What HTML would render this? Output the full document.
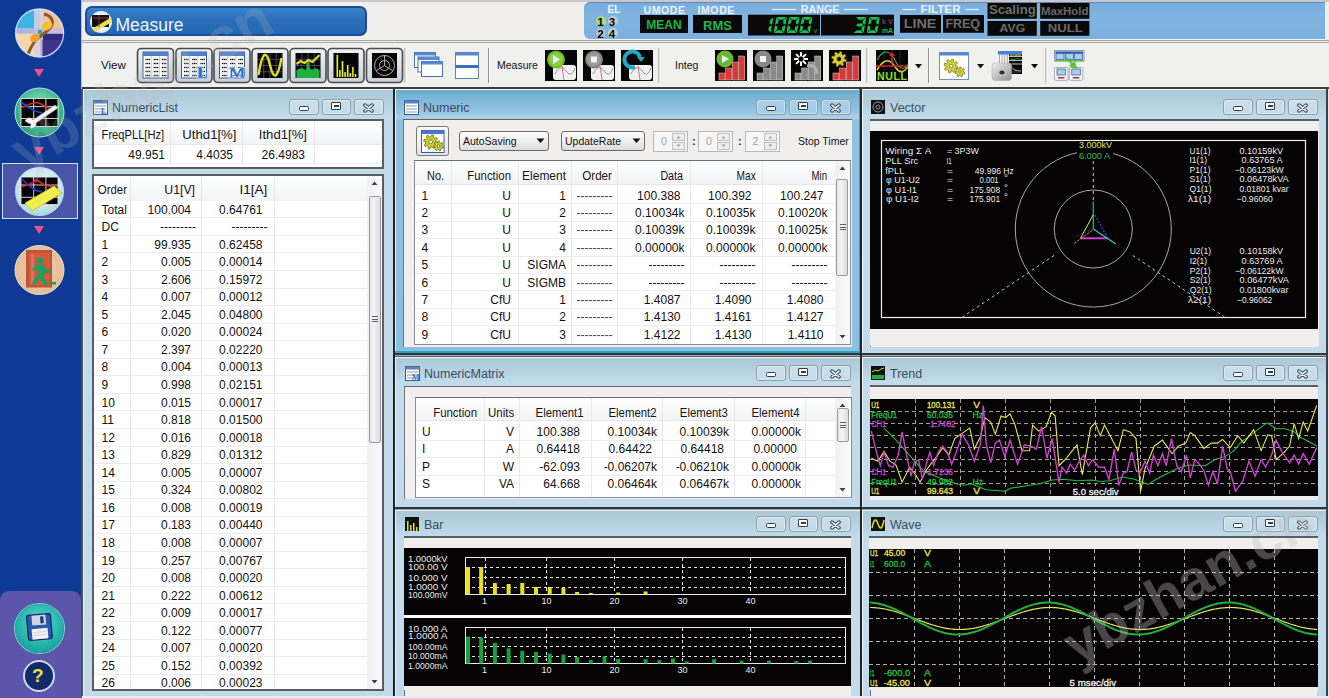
<!DOCTYPE html><html><head><meta charset="utf-8"><style>
html,body{margin:0;padding:0;}
body{width:1329px;height:698px;overflow:hidden;position:relative;background:#f0efee;font-family:"Liberation Sans", sans-serif;}
div{box-sizing:border-box;}
</style></head><body>
<div style="position:absolute;left:0px;top:0px;width:81px;height:698px;background:#0e3a95;"></div>
<div style="position:absolute;left:2px;top:163px;width:76px;height:56px;background:#4a55a8;border:1px solid #d8dcf0;"></div>
<div style="position:absolute;left:0px;top:591px;width:81px;height:107px;background:#5b56a9;border-radius:9px 9px 0 0;"></div>
<svg style="position:absolute;left:0;top:0" width="81" height="300"><defs><clipPath id="c1"><circle cx="39.6" cy="33" r="24"/></clipPath><radialGradient id="g2" cx="0.5" cy="0.4" r="0.6"><stop offset="0" stop-color="#a0e8c8"/><stop offset="0.7" stop-color="#40b890"/><stop offset="1" stop-color="#2a9a78"/></radialGradient><radialGradient id="g3" cx="0.5" cy="0.4" r="0.6"><stop offset="0" stop-color="#f0fbff"/><stop offset="0.7" stop-color="#c8e6f0"/><stop offset="1" stop-color="#a8d4e4"/></radialGradient><radialGradient id="g4" cx="0.5" cy="0.5" r="0.6"><stop offset="0" stop-color="#f0d0b0"/><stop offset="0.8" stop-color="#e8bc98"/><stop offset="1" stop-color="#d8c0a0"/></radialGradient></defs><g clip-path="url(#c1)"><rect x="14" y="8" width="26" height="25" fill="#3cb4e4"/><rect x="40" y="8" width="25" height="25" fill="#f0c498"/><rect x="14" y="33" width="26" height="25" fill="#f2d8a8"/><rect x="40" y="33" width="25" height="25" fill="#2c2c84"/><rect x="34" y="8" width="9" height="50" fill="#d8d0e8" opacity="0.85"/><rect x="14" y="28" width="50" height="6" fill="#c8b8e0" opacity="0.8"/><rect x="42" y="40" width="20" height="16" fill="#4a3a90" opacity="0.6"/><path d="M44,14 C52,16 55,22 50,28 C46,33 40,36 36,40 C32,44 30,50 28,54" fill="none" stroke="#8a5a20" stroke-width="3"/><ellipse cx="47" cy="26" rx="6" ry="4" fill="#f0c030" transform="rotate(-30 47 26)"/><ellipse cx="35" cy="38" rx="5" ry="4" fill="#f0a030" transform="rotate(-30 35 38)"/><rect x="38" y="30" width="4" height="4" fill="#30a0a0"/></g><circle cx="39.6" cy="33" r="24" fill="none" stroke="#d8e4f8" stroke-width="1.3" opacity="0.9"/><circle cx="39.5" cy="112.5" r="24.5" fill="url(#g2)"/><circle cx="39.5" cy="112.5" r="24.5" fill="none" stroke="#b8e8e0" stroke-width="1"/><rect x="21" y="98.5" width="37" height="28" fill="#050505"/><path d="M21,98.5 H58 V126.5 H21 Z M33.7,98.5 V126.5 M45.9,98.5 V126.5 M21,106.6 H58 M21,118.5 H58" fill="none" stroke="#e8e8e8" stroke-width="0.9"/><polyline points="21,108 27,105 33,103 38,102.5 45,106 50,109 58,108" fill="none" stroke="#e02020" stroke-width="1.6"/><polyline points="21,102 28,107 35,111 42,113" fill="none" stroke="#2040e0" stroke-width="1.6"/><path d="M25,121 C27,117 31,117 33,120 L55,105 L58,108 L36,123 C37,126 34,129 30,128 L31,124 L28,123 Z" fill="#f4f4f4" stroke="#a0a0a0" stroke-width="0.6"/><circle cx="39.5" cy="191.5" r="24.5" fill="url(#g3)"/><rect x="21" y="177" width="37" height="27.6" fill="#050505"/><path d="M21,177 H58 V204.6 H21 Z M33.7,177 V204.6 M45.9,177 V204.6 M21,185 H58 M21,197.3 H58" fill="none" stroke="#e8e8e8" stroke-width="0.9"/><polyline points="21,187 30,184 37,180 43,184 46,186 58,187" fill="none" stroke="#e02020" stroke-width="1.6"/><polyline points="22,179 28,185 35,190 42,192" fill="none" stroke="#2040e0" stroke-width="1.6"/><path d="M25,203 L54,186 L62,193 L32,211 Z" fill="#f0f050" stroke="#c0b830" stroke-width="0.8"/><path d="M30,205 L56,190" stroke="#c8c030" stroke-width="0.8" stroke-dasharray="1 2"/><circle cx="39.5" cy="270" r="24.5" fill="url(#g4)"/><circle cx="39.5" cy="270" r="24.5" fill="none" stroke="#d8e8d0" stroke-width="1"/><rect x="26" y="250" width="26" height="37.5" fill="#b85838"/><rect x="29" y="252.5" width="21" height="33" fill="#d85838"/><rect x="31" y="254" width="3" height="30" fill="#c09090" opacity="0.6"/><circle cx="39.8" cy="260.4" r="3.3" fill="#20a060"/><path d="M36,264 L43,264.5 L47,270 L52,271 L51.5,273.5 L45.5,272.5 L43,276 L48,284 L45,286 L40,279 L35,285 L32,283 L37.5,275 L37,268 L34,271 L32,269.5 Z" fill="#20a060"/><path d="M49,282 L56,282 L56,284.5 L49,284.5 Z" fill="#20a060"/></svg>
<div style="position:absolute;left:34px;top:69px;width:0;height:0;border-left:5px solid transparent;border-right:5px solid transparent;border-top:8px solid #f0508a;"></div>
<div style="position:absolute;left:34px;top:147px;width:0;height:0;border-left:5px solid transparent;border-right:5px solid transparent;border-top:8px solid #f0508a;"></div>
<div style="position:absolute;left:34px;top:226px;width:0;height:0;border-left:5px solid transparent;border-right:5px solid transparent;border-top:8px solid #f0508a;"></div>
<div style="position:absolute;left:15.0px;top:603.5px;width:49.0px;height:49.0px;border-radius:50%;background:radial-gradient(circle at 50% 40%,#60e0d0 0%,#20b0a8 60%,#188c90 100%);box-shadow:0 0 0 1px #80d8d0;"></div>
<svg style="position:absolute;left:0;top:590px" width="81" height="60"><g transform="rotate(-5 39.5 38)"><rect x="27.5" y="24.5" width="24" height="25" rx="2" fill="#2858b0" stroke="#0c2458" stroke-width="1.2"/><rect x="32.5" y="25" width="14" height="10" fill="#d0d4dc"/><rect x="41" y="26.5" width="3.2" height="7" fill="#203878"/><rect x="31.5" y="38.5" width="16" height="10.5" fill="#f2f2f2"/><line x1="33" y1="42" x2="46" y2="42" stroke="#c0c0c8" stroke-width="0.6"/><line x1="33" y1="45" x2="46" y2="45" stroke="#c0c0c8" stroke-width="0.6"/></g></svg>
<div style="position:absolute;left:24.5px;top:662px;width:28px;height:28px;border-radius:50%;background:#122a6a;box-shadow:0 0 0 2px #d0d8e8;"></div>
<div style="position:absolute;left:32px;top:666px;font-size:19px;line-height:1;color:#e8e040;white-space:pre;font-weight:bold;">?</div>
<div style="position:absolute;left:81px;top:0px;width:1px;height:698px;background:#b8c0d0;"></div>
<div style="position:absolute;left:82px;top:0px;width:1247px;height:2px;background:#c9c7c8;"></div>
<div style="position:absolute;left:82px;top:40px;width:1247px;height:1px;background:#a8a8a8;"></div>
<div style="position:absolute;left:82px;top:42px;width:1247px;height:1px;background:#a8a8a8;"></div>
<div style="position:absolute;left:82px;top:43px;width:1247px;height:45px;background:#f0f0ee;"></div>
<div style="position:absolute;left:85px;top:6px;width:282px;height:30px;background:linear-gradient(#3a82c8,#2a6cb8 50%,#2468b4);border:2px solid #1c4c98;border-radius:7px;"></div>
<div style="position:absolute;left:89.5px;top:10.5px;width:22px;height:22px;border-radius:50%;background:radial-gradient(circle,#f8fcff 40%,#b8d8e8 100%);"></div>
<div style="position:absolute;left:92px;top:15px;width:17px;height:12px;background:#101010;"></div>
<svg style="position:absolute;left:88px;top:9px" width="26" height="26"><path d="M4,20 L22,9 L24,13 L7,23 Z" fill="#e8e050"/><line x1="5" y1="9" x2="21" y2="9" stroke="#a03030" stroke-width="1"/><line x1="11" y1="6" x2="11" y2="18" stroke="#803060" stroke-width="1"/></svg>
<div style="position:absolute;left:115.5px;top:16.5px;font-size:17.5px;line-height:1;color:#eef4fc;white-space:pre;">Measure</div>
<div style="position:absolute;left:584px;top:2px;width:741px;height:37px;background:linear-gradient(#78aede,#80b4e0 40%,#7cb0de);border-top:1px solid #5a8ac0;border-radius:6px 0 0 6px;"></div>
<div style="position:absolute;left:607.5px;top:5px;font-size:10px;line-height:1;color:#eef4fc;white-space:pre;font-weight:bold;">EL</div>
<div style="position:absolute;left:596px;top:16px;width:10px;height:10px;border-radius:50%;background:#a8d880;"></div>
<div style="position:absolute;left:607.5px;top:16px;width:10px;height:10px;border-radius:50%;background:#c4ccd4;"></div>
<div style="position:absolute;left:596px;top:28px;width:10px;height:10px;border-radius:50%;background:#b8c4cc;"></div>
<div style="position:absolute;left:607.5px;top:28px;width:10px;height:10px;border-radius:50%;background:#c4ccd4;"></div>
<div style="position:absolute;left:597.5px;top:17.0px;font-size:11px;line-height:1;color:#000;white-space:pre;font-weight:bold;">1</div>
<div style="position:absolute;left:609px;top:17.0px;font-size:11px;line-height:1;color:#000;white-space:pre;font-weight:bold;">3</div>
<div style="position:absolute;left:597.5px;top:29.0px;font-size:11px;line-height:1;color:#000;white-space:pre;font-weight:bold;">2</div>
<div style="position:absolute;left:609px;top:29.0px;font-size:11px;line-height:1;color:#000;white-space:pre;font-weight:bold;">4</div>
<div style="position:absolute;left:643.5px;top:5px;font-size:10.5px;line-height:1;color:#eef4fc;white-space:pre;font-weight:bold;letter-spacing:0.6px;">UMODE</div>
<div style="position:absolute;left:697.5px;top:5px;font-size:10.5px;line-height:1;color:#eef4fc;white-space:pre;font-weight:bold;letter-spacing:0.6px;">IMODE</div>
<div style="position:absolute;left:640px;top:15px;width:48px;height:17.5px;background:#0a0808;"></div>
<div style="position:absolute;left:564px;width:200px;top:19px;font-size:12px;line-height:1;color:#18b848;white-space:pre;text-align:center;font-weight:bold;">MEAN</div>
<div style="position:absolute;left:693px;top:15px;width:49px;height:17.5px;background:#0a0808;"></div>
<div style="position:absolute;left:617.5px;width:200px;top:19px;font-size:13px;line-height:1;color:#18b848;white-space:pre;text-align:center;font-weight:bold;">RMS</div>
<svg style="position:absolute;left:0;top:0" width="1329" height="40"><line x1="772" y1="9.5" x2="796" y2="9.5" stroke="#eef4fc" stroke-width="1.2"/><line x1="844" y1="9.5" x2="868" y2="9.5" stroke="#eef4fc" stroke-width="1.2"/><text x="800.8" y="12.8" font-family="Liberation Sans" font-size="10.5" fill="#eef4fc" font-weight="bold" textLength="38.5" lengthAdjust="spacingAndGlyphs">RANGE</text><rect x="748" y="14.7" width="72" height="20.8" fill="#0a0808"/><rect x="821" y="14.7" width="73" height="20.8" fill="#0a0808"/><g transform="translate(4.4,0) skewX(-10)"><polygon points="769.20,20.15 772.00,17.35 772.00,24.65 769.20,23.25" fill="#18c050"/><polygon points="769.20,26.75 772.00,25.35 772.00,32.65 769.20,29.85" fill="#18c050"/></g><g transform="translate(4.4,0) skewX(-10)"><polygon points="775.35,17.00 785.15,17.00 782.35,19.80 778.15,19.80" fill="#18c050"/><polygon points="778.15,30.20 782.35,30.20 785.15,33.00 775.35,33.00" fill="#18c050"/><polygon points="775.00,17.35 777.80,20.15 777.80,23.25 775.00,24.65" fill="#18c050"/><polygon points="775.00,25.35 777.80,26.75 777.80,29.85 775.00,32.65" fill="#18c050"/><polygon points="782.70,20.15 785.50,17.35 785.50,24.65 782.70,23.25" fill="#18c050"/><polygon points="782.70,26.75 785.50,25.35 785.50,32.65 782.70,29.85" fill="#18c050"/></g><g transform="translate(4.4,0) skewX(-10)"><polygon points="788.15,17.00 797.95,17.00 795.15,19.80 790.95,19.80" fill="#18c050"/><polygon points="790.95,30.20 795.15,30.20 797.95,33.00 788.15,33.00" fill="#18c050"/><polygon points="787.80,17.35 790.60,20.15 790.60,23.25 787.80,24.65" fill="#18c050"/><polygon points="787.80,25.35 790.60,26.75 790.60,29.85 787.80,32.65" fill="#18c050"/><polygon points="795.50,20.15 798.30,17.35 798.30,24.65 795.50,23.25" fill="#18c050"/><polygon points="795.50,26.75 798.30,25.35 798.30,32.65 795.50,29.85" fill="#18c050"/></g><g transform="translate(4.4,0) skewX(-10)"><polygon points="800.95,17.00 810.75,17.00 807.95,19.80 803.75,19.80" fill="#18c050"/><polygon points="803.75,30.20 807.95,30.20 810.75,33.00 800.95,33.00" fill="#18c050"/><polygon points="800.60,17.35 803.40,20.15 803.40,23.25 800.60,24.65" fill="#18c050"/><polygon points="800.60,25.35 803.40,26.75 803.40,29.85 800.60,32.65" fill="#18c050"/><polygon points="808.30,20.15 811.10,17.35 811.10,24.65 808.30,23.25" fill="#18c050"/><polygon points="808.30,26.75 811.10,25.35 811.10,32.65 808.30,29.85" fill="#18c050"/></g><text x="813.5" y="32.5" font-family="Liberation Sans" font-size="6" fill="#18c050" font-weight="normal" textLength="4" lengthAdjust="spacingAndGlyphs">V</text><g transform="translate(4.4,0) skewX(-10)"><polygon points="854.85,17.00 864.65,17.00 861.85,19.80 857.65,19.80" fill="#18c050"/><polygon points="857.65,30.20 861.85,30.20 864.65,33.00 854.85,33.00" fill="#18c050"/><polygon points="856.25,25.00 857.65,23.60 861.85,23.60 863.25,25.00 861.85,26.40 857.65,26.40" fill="#18c050"/><polygon points="862.20,20.15 865.00,17.35 865.00,24.65 862.20,23.25" fill="#18c050"/><polygon points="862.20,26.75 865.00,25.35 865.00,32.65 862.20,29.85" fill="#18c050"/></g><g transform="translate(4.4,0) skewX(-10)"><polygon points="868.35,17.00 878.15,17.00 875.35,19.80 871.15,19.80" fill="#18c050"/><polygon points="871.15,30.20 875.35,30.20 878.15,33.00 868.35,33.00" fill="#18c050"/><polygon points="868.00,17.35 870.80,20.15 870.80,23.25 868.00,24.65" fill="#18c050"/><polygon points="868.00,25.35 870.80,26.75 870.80,29.85 868.00,32.65" fill="#18c050"/><polygon points="875.70,20.15 878.50,17.35 878.50,24.65 875.70,23.25" fill="#18c050"/><polygon points="875.70,26.75 878.50,25.35 878.50,32.65 875.70,29.85" fill="#18c050"/></g><text x="882" y="24" font-family="Liberation Sans" font-size="6.5" fill="#a04878" font-weight="normal" textLength="11" lengthAdjust="spacingAndGlyphs">k V</text><text x="882" y="32.5" font-family="Liberation Sans" font-size="7" fill="#18c050" font-weight="bold" textLength="11" lengthAdjust="spacingAndGlyphs">mA</text><line x1="902.5" y1="9.5" x2="916" y2="9.5" stroke="#eef4fc" stroke-width="1.2"/><line x1="965.7" y1="9.5" x2="978.5" y2="9.5" stroke="#eef4fc" stroke-width="1.2"/><text x="920.6" y="13.2" font-family="Liberation Sans" font-size="10.5" fill="#eef4fc" font-weight="bold" textLength="40" lengthAdjust="spacingAndGlyphs">FILTER</text><rect x="900" y="15" width="41" height="17.8" fill="#0a0808"/><rect x="943" y="15" width="41" height="17.8" fill="#0a0808"/><text x="903.7" y="28.3" font-family="Liberation Sans" font-size="13" fill="#6e6e6e" font-weight="bold" textLength="32.7" lengthAdjust="spacingAndGlyphs">LINE</text><text x="945.4" y="28.3" font-family="Liberation Sans" font-size="13" fill="#6e6e6e" font-weight="bold" textLength="34.6" lengthAdjust="spacingAndGlyphs">FREQ</text><rect x="987.5" y="3" width="49.3" height="15.8" fill="#0a0808"/><rect x="1040.2" y="3" width="49.2" height="15.8" fill="#0a0808"/><rect x="987.5" y="21" width="49.3" height="14.8" fill="#0a0808"/><rect x="1040.2" y="21" width="49.2" height="14.8" fill="#0a0808"/><text x="989" y="14.3" font-family="Liberation Sans" font-size="12.5" fill="#6a7068" font-weight="bold" textLength="46.7" lengthAdjust="spacingAndGlyphs">Scaling</text><text x="1041" y="15" font-family="Liberation Sans" font-size="10.5" fill="#686868" font-weight="bold" textLength="47.4" lengthAdjust="spacingAndGlyphs">MaxHold</text><text x="999.6" y="32.4" font-family="Liberation Sans" font-size="11.5" fill="#6a6a6a" font-weight="bold" textLength="25.6" lengthAdjust="spacingAndGlyphs">AVG</text><text x="1047.7" y="32.4" font-family="Liberation Sans" font-size="11.5" fill="#6a6a6a" font-weight="bold" textLength="35" lengthAdjust="spacingAndGlyphs">NULL</text></svg>
<div style="position:absolute;left:101px;top:60px;font-size:11.5px;line-height:1;color:#111;white-space:pre;">View</div>
<svg style="position:absolute;left:0;top:0" width="1329" height="90"><defs><linearGradient id="btng" x1="0" y1="0" x2="0" y2="1"><stop offset="0" stop-color="#f0f4f8"/><stop offset="1" stop-color="#c8d0d8"/></linearGradient><linearGradient id="camg" x1="0" y1="0" x2="1" y2="1"><stop offset="0" stop-color="#f0f0f0"/><stop offset="1" stop-color="#909090"/></linearGradient></defs><rect x="137.5" y="48.5" width="36" height="34" rx="4" fill="url(#btng)" stroke="#4a4a4a" stroke-width="1.6"/><rect x="176.0" y="48.5" width="36" height="34" rx="4" fill="url(#btng)" stroke="#4a4a4a" stroke-width="1.6"/><rect x="214.0" y="48.5" width="36" height="34" rx="4" fill="url(#btng)" stroke="#4a4a4a" stroke-width="1.6"/><rect x="252.0" y="48.5" width="36" height="34" rx="4" fill="url(#btng)" stroke="#4a4a4a" stroke-width="1.6"/><rect x="290.0" y="48.5" width="36" height="34" rx="4" fill="url(#btng)" stroke="#4a4a4a" stroke-width="1.6"/><rect x="328.0" y="48.5" width="36" height="34" rx="4" fill="url(#btng)" stroke="#4a4a4a" stroke-width="1.6"/><rect x="366.5" y="48.5" width="36" height="34" rx="4" fill="url(#btng)" stroke="#4a4a4a" stroke-width="1.6"/><rect x="143" y="52" width="25" height="26" fill="#fff" stroke="#3a5a90" stroke-width="1"/><rect x="143" y="52" width="25" height="4" fill="#5080c8"/><rect x="145.4" y="58.8" width="1.3" height="1.4" fill="#111"/><rect x="147.1" y="58.8" width="1.3" height="1.4" fill="#111"/><rect x="148.8" y="58.8" width="1.3" height="1.4" fill="#111"/><rect x="153.6" y="58.8" width="1.3" height="1.4" fill="#111"/><rect x="155.3" y="58.8" width="1.3" height="1.4" fill="#111"/><rect x="157.0" y="58.8" width="1.3" height="1.4" fill="#111"/><rect x="161.8" y="58.8" width="1.3" height="1.4" fill="#111"/><rect x="163.5" y="58.8" width="1.3" height="1.4" fill="#111"/><rect x="165.2" y="58.8" width="1.3" height="1.4" fill="#111"/><rect x="145.4" y="62.8" width="1.3" height="1.4" fill="#111"/><rect x="147.1" y="62.8" width="1.3" height="1.4" fill="#111"/><rect x="148.8" y="62.8" width="1.3" height="1.4" fill="#111"/><rect x="153.6" y="62.8" width="1.3" height="1.4" fill="#111"/><rect x="155.3" y="62.8" width="1.3" height="1.4" fill="#111"/><rect x="157.0" y="62.8" width="1.3" height="1.4" fill="#111"/><rect x="161.8" y="62.8" width="1.3" height="1.4" fill="#111"/><rect x="163.5" y="62.8" width="1.3" height="1.4" fill="#111"/><rect x="165.2" y="62.8" width="1.3" height="1.4" fill="#111"/><rect x="145.4" y="66.8" width="1.3" height="1.4" fill="#111"/><rect x="147.1" y="66.8" width="1.3" height="1.4" fill="#111"/><rect x="148.8" y="66.8" width="1.3" height="1.4" fill="#111"/><rect x="153.6" y="66.8" width="1.3" height="1.4" fill="#111"/><rect x="155.3" y="66.8" width="1.3" height="1.4" fill="#111"/><rect x="157.0" y="66.8" width="1.3" height="1.4" fill="#111"/><rect x="161.8" y="66.8" width="1.3" height="1.4" fill="#111"/><rect x="163.5" y="66.8" width="1.3" height="1.4" fill="#111"/><rect x="165.2" y="66.8" width="1.3" height="1.4" fill="#111"/><rect x="145.4" y="70.8" width="1.3" height="1.4" fill="#111"/><rect x="147.1" y="70.8" width="1.3" height="1.4" fill="#111"/><rect x="148.8" y="70.8" width="1.3" height="1.4" fill="#111"/><rect x="153.6" y="70.8" width="1.3" height="1.4" fill="#111"/><rect x="155.3" y="70.8" width="1.3" height="1.4" fill="#111"/><rect x="157.0" y="70.8" width="1.3" height="1.4" fill="#111"/><rect x="161.8" y="70.8" width="1.3" height="1.4" fill="#111"/><rect x="163.5" y="70.8" width="1.3" height="1.4" fill="#111"/><rect x="165.2" y="70.8" width="1.3" height="1.4" fill="#111"/><rect x="145.4" y="74.8" width="1.3" height="1.4" fill="#111"/><rect x="147.1" y="74.8" width="1.3" height="1.4" fill="#111"/><rect x="148.8" y="74.8" width="1.3" height="1.4" fill="#111"/><rect x="153.6" y="74.8" width="1.3" height="1.4" fill="#111"/><rect x="155.3" y="74.8" width="1.3" height="1.4" fill="#111"/><rect x="157.0" y="74.8" width="1.3" height="1.4" fill="#111"/><rect x="161.8" y="74.8" width="1.3" height="1.4" fill="#111"/><rect x="163.5" y="74.8" width="1.3" height="1.4" fill="#111"/><rect x="165.2" y="74.8" width="1.3" height="1.4" fill="#111"/><line x1="151.2" y1="56" x2="151.2" y2="78" stroke="#aab" stroke-width="0.6"/><line x1="159.4" y1="56" x2="159.4" y2="78" stroke="#aab" stroke-width="0.6"/><rect x="181.5" y="52" width="25" height="26" fill="#fff" stroke="#3a5a90" stroke-width="1"/><rect x="181.5" y="52" width="25" height="4" fill="#5080c8"/><rect x="183.9" y="58.8" width="1.3" height="1.4" fill="#111"/><rect x="185.6" y="58.8" width="1.3" height="1.4" fill="#111"/><rect x="187.3" y="58.8" width="1.3" height="1.4" fill="#111"/><rect x="192.1" y="58.8" width="1.3" height="1.4" fill="#111"/><rect x="193.8" y="58.8" width="1.3" height="1.4" fill="#111"/><rect x="195.5" y="58.8" width="1.3" height="1.4" fill="#111"/><rect x="200.3" y="58.8" width="1.3" height="1.4" fill="#111"/><rect x="202.0" y="58.8" width="1.3" height="1.4" fill="#111"/><rect x="203.7" y="58.8" width="1.3" height="1.4" fill="#111"/><rect x="183.9" y="62.8" width="1.3" height="1.4" fill="#111"/><rect x="185.6" y="62.8" width="1.3" height="1.4" fill="#111"/><rect x="187.3" y="62.8" width="1.3" height="1.4" fill="#111"/><rect x="192.1" y="62.8" width="1.3" height="1.4" fill="#111"/><rect x="193.8" y="62.8" width="1.3" height="1.4" fill="#111"/><rect x="195.5" y="62.8" width="1.3" height="1.4" fill="#111"/><rect x="200.3" y="62.8" width="1.3" height="1.4" fill="#111"/><rect x="202.0" y="62.8" width="1.3" height="1.4" fill="#111"/><rect x="203.7" y="62.8" width="1.3" height="1.4" fill="#111"/><rect x="183.9" y="66.8" width="1.3" height="1.4" fill="#111"/><rect x="185.6" y="66.8" width="1.3" height="1.4" fill="#111"/><rect x="187.3" y="66.8" width="1.3" height="1.4" fill="#111"/><rect x="192.1" y="66.8" width="1.3" height="1.4" fill="#111"/><rect x="193.8" y="66.8" width="1.3" height="1.4" fill="#111"/><rect x="195.5" y="66.8" width="1.3" height="1.4" fill="#111"/><rect x="200.3" y="66.8" width="1.3" height="1.4" fill="#111"/><rect x="202.0" y="66.8" width="1.3" height="1.4" fill="#111"/><rect x="203.7" y="66.8" width="1.3" height="1.4" fill="#111"/><rect x="183.9" y="70.8" width="1.3" height="1.4" fill="#111"/><rect x="185.6" y="70.8" width="1.3" height="1.4" fill="#111"/><rect x="187.3" y="70.8" width="1.3" height="1.4" fill="#111"/><rect x="192.1" y="70.8" width="1.3" height="1.4" fill="#111"/><rect x="193.8" y="70.8" width="1.3" height="1.4" fill="#111"/><rect x="195.5" y="70.8" width="1.3" height="1.4" fill="#111"/><rect x="200.3" y="70.8" width="1.3" height="1.4" fill="#111"/><rect x="202.0" y="70.8" width="1.3" height="1.4" fill="#111"/><rect x="203.7" y="70.8" width="1.3" height="1.4" fill="#111"/><rect x="183.9" y="74.8" width="1.3" height="1.4" fill="#111"/><rect x="185.6" y="74.8" width="1.3" height="1.4" fill="#111"/><rect x="187.3" y="74.8" width="1.3" height="1.4" fill="#111"/><rect x="192.1" y="74.8" width="1.3" height="1.4" fill="#111"/><rect x="193.8" y="74.8" width="1.3" height="1.4" fill="#111"/><rect x="195.5" y="74.8" width="1.3" height="1.4" fill="#111"/><rect x="200.3" y="74.8" width="1.3" height="1.4" fill="#111"/><rect x="202.0" y="74.8" width="1.3" height="1.4" fill="#111"/><rect x="203.7" y="74.8" width="1.3" height="1.4" fill="#111"/><line x1="189.7" y1="56" x2="189.7" y2="78" stroke="#aab" stroke-width="0.6"/><line x1="197.9" y1="56" x2="197.9" y2="78" stroke="#aab" stroke-width="0.6"/><rect x="219.5" y="52" width="25" height="26" fill="#fff" stroke="#3a5a90" stroke-width="1"/><rect x="219.5" y="52" width="25" height="4" fill="#5080c8"/><rect x="221.9" y="58.8" width="1.3" height="1.4" fill="#111"/><rect x="223.6" y="58.8" width="1.3" height="1.4" fill="#111"/><rect x="225.3" y="58.8" width="1.3" height="1.4" fill="#111"/><rect x="230.1" y="58.8" width="1.3" height="1.4" fill="#111"/><rect x="231.8" y="58.8" width="1.3" height="1.4" fill="#111"/><rect x="233.5" y="58.8" width="1.3" height="1.4" fill="#111"/><rect x="238.3" y="58.8" width="1.3" height="1.4" fill="#111"/><rect x="240.0" y="58.8" width="1.3" height="1.4" fill="#111"/><rect x="241.7" y="58.8" width="1.3" height="1.4" fill="#111"/><rect x="221.9" y="62.8" width="1.3" height="1.4" fill="#111"/><rect x="223.6" y="62.8" width="1.3" height="1.4" fill="#111"/><rect x="225.3" y="62.8" width="1.3" height="1.4" fill="#111"/><rect x="230.1" y="62.8" width="1.3" height="1.4" fill="#111"/><rect x="231.8" y="62.8" width="1.3" height="1.4" fill="#111"/><rect x="233.5" y="62.8" width="1.3" height="1.4" fill="#111"/><rect x="238.3" y="62.8" width="1.3" height="1.4" fill="#111"/><rect x="240.0" y="62.8" width="1.3" height="1.4" fill="#111"/><rect x="241.7" y="62.8" width="1.3" height="1.4" fill="#111"/><rect x="221.9" y="66.8" width="1.3" height="1.4" fill="#111"/><rect x="223.6" y="66.8" width="1.3" height="1.4" fill="#111"/><rect x="225.3" y="66.8" width="1.3" height="1.4" fill="#111"/><rect x="230.1" y="66.8" width="1.3" height="1.4" fill="#111"/><rect x="231.8" y="66.8" width="1.3" height="1.4" fill="#111"/><rect x="233.5" y="66.8" width="1.3" height="1.4" fill="#111"/><rect x="238.3" y="66.8" width="1.3" height="1.4" fill="#111"/><rect x="240.0" y="66.8" width="1.3" height="1.4" fill="#111"/><rect x="241.7" y="66.8" width="1.3" height="1.4" fill="#111"/><rect x="221.9" y="70.8" width="1.3" height="1.4" fill="#111"/><rect x="223.6" y="70.8" width="1.3" height="1.4" fill="#111"/><rect x="225.3" y="70.8" width="1.3" height="1.4" fill="#111"/><rect x="230.1" y="70.8" width="1.3" height="1.4" fill="#111"/><rect x="231.8" y="70.8" width="1.3" height="1.4" fill="#111"/><rect x="233.5" y="70.8" width="1.3" height="1.4" fill="#111"/><rect x="238.3" y="70.8" width="1.3" height="1.4" fill="#111"/><rect x="240.0" y="70.8" width="1.3" height="1.4" fill="#111"/><rect x="241.7" y="70.8" width="1.3" height="1.4" fill="#111"/><rect x="221.9" y="74.8" width="1.3" height="1.4" fill="#111"/><rect x="223.6" y="74.8" width="1.3" height="1.4" fill="#111"/><rect x="225.3" y="74.8" width="1.3" height="1.4" fill="#111"/><rect x="230.1" y="74.8" width="1.3" height="1.4" fill="#111"/><rect x="231.8" y="74.8" width="1.3" height="1.4" fill="#111"/><rect x="233.5" y="74.8" width="1.3" height="1.4" fill="#111"/><rect x="238.3" y="74.8" width="1.3" height="1.4" fill="#111"/><rect x="240.0" y="74.8" width="1.3" height="1.4" fill="#111"/><rect x="241.7" y="74.8" width="1.3" height="1.4" fill="#111"/><line x1="227.7" y1="56" x2="227.7" y2="78" stroke="#aab" stroke-width="0.6"/><line x1="235.9" y1="56" x2="235.9" y2="78" stroke="#aab" stroke-width="0.6"/><path d="M196.5,66.8 H203.5 V68.2 H202.3 V76.4 H205.6 V73.2 H207.4 V78.2 H196.5 V76.8 H198.2 V68.2 H196.5 Z" fill="#2a70d0" stroke="#fff" stroke-width="0.6"/><path d="M229,67.6 H234.2 L237.2,73.6 L240.2,67.6 H245.2 V69 H243.9 V76.8 H245.2 V78.2 H239.6 V76.8 H240.8 V71.2 L237.6,78.2 H236.6 L232.6,71.2 V76.8 H233.8 V78.2 H229 V76.8 H230.3 V69 H229 Z" fill="#2a70d0" stroke="#fff" stroke-width="0.6"/><rect x="257.5" y="53" width="25" height="25" fill="#050505"/><rect x="295.5" y="53" width="25" height="25" fill="#050505"/><rect x="333.5" y="53" width="25" height="25" fill="#050505"/><rect x="372" y="53" width="25" height="25" fill="#050505"/><line x1="263.75" y1="53" x2="263.75" y2="78" stroke="#6a5a80" stroke-width="0.7"/><line x1="257.5" y1="59.25" x2="282.5" y2="59.25" stroke="#6a5a80" stroke-width="0.7"/><line x1="270.0" y1="53" x2="270.0" y2="78" stroke="#6a5a80" stroke-width="0.7"/><line x1="257.5" y1="65.5" x2="282.5" y2="65.5" stroke="#6a5a80" stroke-width="0.7"/><line x1="276.25" y1="53" x2="276.25" y2="78" stroke="#6a5a80" stroke-width="0.7"/><line x1="257.5" y1="71.75" x2="282.5" y2="71.75" stroke="#6a5a80" stroke-width="0.7"/><line x1="301.75" y1="53" x2="301.75" y2="78" stroke="#6a5a80" stroke-width="0.7"/><line x1="295.5" y1="59.25" x2="320.5" y2="59.25" stroke="#6a5a80" stroke-width="0.7"/><line x1="308.0" y1="53" x2="308.0" y2="78" stroke="#6a5a80" stroke-width="0.7"/><line x1="295.5" y1="65.5" x2="320.5" y2="65.5" stroke="#6a5a80" stroke-width="0.7"/><line x1="314.25" y1="53" x2="314.25" y2="78" stroke="#6a5a80" stroke-width="0.7"/><line x1="295.5" y1="71.75" x2="320.5" y2="71.75" stroke="#6a5a80" stroke-width="0.7"/><path d="M258.5,75 C262.5,50 266.5,50 270.0,65 C273.5,80 277.5,80 281.5,58" fill="none" stroke="#e0e020" stroke-width="2.4"/><polyline points="296.5,64 300.5,61 304.5,63 308.5,60 312.5,62 316.5,58 319.5,55" fill="none" stroke="#d8e020" stroke-width="2.2"/><path d="M296.5,78 L296.5,70 L301.5,68 L305.5,70 L308.5,66 L311.5,70 L315.5,68 L319.5,70 L319.5,78 Z" fill="#20b040"/><rect x="306.5" y="62" width="3" height="10" fill="#20b040"/><rect x="336.5" y="55" width="1.6" height="22" fill="#f0f010"/><rect x="339.1" y="70" width="1.6" height="7" fill="#f0f010"/><rect x="341.7" y="61" width="1.6" height="16" fill="#f0f010"/><rect x="344.3" y="72" width="1.6" height="5" fill="#f0f010"/><rect x="346.9" y="65" width="1.6" height="12" fill="#f0f010"/><rect x="349.5" y="73" width="1.6" height="4" fill="#f0f010"/><rect x="352.1" y="67" width="1.6" height="10" fill="#f0f010"/><rect x="354.7" y="74" width="1.6" height="3" fill="#f0f010"/><circle cx="384.5" cy="65.5" r="10" fill="none" stroke="#b0b0b0" stroke-width="1"/><circle cx="384.5" cy="65.5" r="5" fill="none" stroke="#b0b0b0" stroke-width="1"/><path d="M384.5,55 L384.5,65.5 L376,71 M384.5,65.5 L393,71" fill="none" stroke="#b0b0b0" stroke-width="1"/><line x1="405" y1="48" x2="405" y2="83" stroke="#909090" stroke-width="1"/><line x1="406" y1="48" x2="406" y2="83" stroke="#fff" stroke-width="1"/><line x1="488.5" y1="48" x2="488.5" y2="83" stroke="#909090" stroke-width="1"/><line x1="489.5" y1="48" x2="489.5" y2="83" stroke="#fff" stroke-width="1"/><line x1="659" y1="48" x2="659" y2="83" stroke="#909090" stroke-width="1"/><line x1="660" y1="48" x2="660" y2="83" stroke="#fff" stroke-width="1"/><line x1="867" y1="48" x2="867" y2="83" stroke="#909090" stroke-width="1"/><line x1="868" y1="48" x2="868" y2="83" stroke="#fff" stroke-width="1"/><line x1="928.5" y1="48" x2="928.5" y2="83" stroke="#909090" stroke-width="1"/><line x1="929.5" y1="48" x2="929.5" y2="83" stroke="#fff" stroke-width="1"/><line x1="1046" y1="48" x2="1046" y2="83" stroke="#909090" stroke-width="1"/><line x1="1047" y1="48" x2="1047" y2="83" stroke="#fff" stroke-width="1"/><rect x="414.5" y="52.5" width="21" height="15" fill="#fff" stroke="#4a70b0" stroke-width="1"/><rect x="414.5" y="52.5" width="21" height="3" fill="#5a88d0"/><rect x="418.0" y="57.0" width="21" height="15" fill="#fff" stroke="#4a70b0" stroke-width="1"/><rect x="418.0" y="57.0" width="21" height="3" fill="#5a88d0"/><rect x="421.5" y="61.5" width="21" height="15" fill="#fff" stroke="#4a70b0" stroke-width="1"/><rect x="421.5" y="61.5" width="21" height="3" fill="#5a88d0"/><rect x="455.5" y="52.5" width="23" height="26" fill="#fff" stroke="#6080b0" stroke-width="1"/><rect x="455.5" y="52.5" width="23" height="3" fill="#5a88d0"/><rect x="455.5" y="65" width="23" height="3" fill="#3a70c0"/><rect x="545" y="50" width="32" height="31" fill="#050505"/><rect x="553" y="65" width="23" height="15" rx="3" fill="#f0f0f0"/><path d="M555,74 C559,66 563,66 567,72 C570,76 573,74 575,68" fill="none" stroke="#6a7aa0" stroke-width="0.8"/><line x1="562" y1="66" x2="564" y2="80" stroke="#e05050" stroke-width="0.8"/><circle cx="556" cy="59.5" r="9" fill="#6ab830"/><circle cx="556" cy="59.5" r="7" fill="#8cd040"/><path d="M553,55 L560,59.5 L553,64 Z" fill="#e8f0ff"/><rect x="583" y="50" width="32" height="31" fill="#050505"/><rect x="591" y="65" width="23" height="15" rx="3" fill="#f0f0f0"/><path d="M593,74 C597,66 601,66 605,72 C608,76 611,74 613,68" fill="none" stroke="#6a7aa0" stroke-width="0.8"/><line x1="600" y1="66" x2="602" y2="80" stroke="#e05050" stroke-width="0.8"/><circle cx="594" cy="59.5" r="9" fill="#808080"/><circle cx="594" cy="59.5" r="7" fill="#9a9a9a"/><rect x="591" y="56.5" width="6" height="6" fill="#f4f4f4"/><rect x="621" y="50" width="32" height="31" fill="#050505"/><rect x="629" y="65" width="23" height="15" rx="3" fill="#f0f0f0"/><path d="M631,74 C635,66 639,66 643,72 C646,76 649,74 651,68" fill="none" stroke="#6a7aa0" stroke-width="0.8"/><line x1="638" y1="66" x2="640" y2="80" stroke="#e05050" stroke-width="0.8"/><path d="M640,57 A8,8 0 1 0 635,67" fill="none" stroke="#20a8c0" stroke-width="4"/><path d="M637,57 L645,57 L641,62 Z" fill="#20a8c0"/><rect x="715" y="50" width="32" height="31" fill="#050505"/><rect x="719.0" y="73" width="6" height="7" fill="#d83838" stroke="#fff" stroke-width="0.4"/><rect x="725.6" y="68" width="6" height="12" fill="#d83838" stroke="#fff" stroke-width="0.4"/><rect x="732.2" y="62" width="6" height="18" fill="#d83838" stroke="#fff" stroke-width="0.4"/><rect x="738.8" y="56" width="6" height="24" fill="#d83838" stroke="#fff" stroke-width="0.4"/><circle cx="725" cy="59" r="8.5" fill="#6ab830"/><path d="M722,55 L729,59 L722,63 Z" fill="#e8f0ff"/><rect x="753" y="50" width="32" height="31" fill="#050505"/><rect x="757.0" y="73" width="6" height="7" fill="#8a8a8a" stroke="#fff" stroke-width="0.4"/><rect x="763.6" y="68" width="6" height="12" fill="#8a8a8a" stroke="#fff" stroke-width="0.4"/><rect x="770.2" y="62" width="6" height="18" fill="#8a8a8a" stroke="#fff" stroke-width="0.4"/><rect x="776.8" y="56" width="6" height="24" fill="#8a8a8a" stroke="#fff" stroke-width="0.4"/><circle cx="763" cy="59" r="8.5" fill="#888"/><rect x="760" y="56" width="6" height="6" fill="#f4f4f4"/><rect x="791" y="50" width="32" height="31" fill="#050505"/><rect x="795.0" y="73" width="6" height="7" fill="#8a8a8a" stroke="#fff" stroke-width="0.4"/><rect x="801.6" y="68" width="6" height="12" fill="#8a8a8a" stroke="#fff" stroke-width="0.4"/><rect x="808.2" y="62" width="6" height="18" fill="#8a8a8a" stroke="#fff" stroke-width="0.4"/><rect x="814.8" y="56" width="6" height="24" fill="#8a8a8a" stroke="#fff" stroke-width="0.4"/><line x1="803.5" y1="59.0" x2="808.0" y2="59.0" stroke="#fff" stroke-width="2"/><line x1="802.8" y1="60.8" x2="805.9" y2="63.9" stroke="#fff" stroke-width="2"/><line x1="801.0" y1="61.5" x2="801.0" y2="66.0" stroke="#fff" stroke-width="2"/><line x1="799.2" y1="60.8" x2="796.1" y2="63.9" stroke="#fff" stroke-width="2"/><line x1="798.5" y1="59.0" x2="794.0" y2="59.0" stroke="#fff" stroke-width="2"/><line x1="799.2" y1="57.2" x2="796.1" y2="54.1" stroke="#fff" stroke-width="2"/><line x1="801.0" y1="56.5" x2="801.0" y2="52.0" stroke="#fff" stroke-width="2"/><line x1="802.8" y1="57.2" x2="805.9" y2="54.1" stroke="#fff" stroke-width="2"/><path d="M807,66 C813,64 817,68 817,74" fill="none" stroke="#b0b0b0" stroke-width="3"/><rect x="829" y="50" width="32" height="31" fill="#050505"/><rect x="833.0" y="73" width="6" height="7" fill="#d83838" stroke="#fff" stroke-width="0.4"/><rect x="839.6" y="68" width="6" height="12" fill="#d83838" stroke="#fff" stroke-width="0.4"/><rect x="846.2" y="62" width="6" height="18" fill="#d83838" stroke="#fff" stroke-width="0.4"/><rect x="852.8" y="56" width="6" height="24" fill="#d83838" stroke="#fff" stroke-width="0.4"/><path d="M844.40,59.00 L846.45,59.88 L845.93,61.87 L843.71,61.64 L842.82,62.82 L843.64,64.89 L841.87,65.93 L840.47,64.20 L839.00,64.40 L838.12,66.45 L836.13,65.93 L836.36,63.71 L835.18,62.82 L833.11,63.64 L832.07,61.87 L833.80,60.47 L833.60,59.00 L831.55,58.12 L832.07,56.13 L834.29,56.36 L835.18,55.18 L834.36,53.11 L836.13,52.07 L837.53,53.80 L839.00,53.60 L839.88,51.55 L841.87,52.07 L841.64,54.29 L842.82,55.18 L844.89,54.36 L845.93,56.13 L844.20,57.53 Z M841.20,59.00 A2.2,2.2 0 1 0 836.80,59.00 A2.2,2.2 0 1 0 841.20,59.00 Z" fill="#d8d030" stroke="#908020" stroke-width="0.6" fill-rule="evenodd"/><rect x="876" y="50" width="32" height="31" fill="#050505"/><line x1="884" y1="50" x2="884" y2="81" stroke="#304050" stroke-width="0.6"/><line x1="892" y1="50" x2="892" y2="81" stroke="#304050" stroke-width="0.6"/><line x1="900" y1="50" x2="900" y2="81" stroke="#304050" stroke-width="0.6"/><path d="M877,60 C884,48 890,50 896,62 C900,70 905,70 908,64" fill="none" stroke="#40a040" stroke-width="1.2"/><path d="M877,70 C884,58 890,58 896,68 C900,74 905,72 908,66" fill="none" stroke="#e0d020" stroke-width="1.5"/><line x1="876" y1="66" x2="908" y2="66" stroke="#e02020" stroke-width="1.5"/><path d="M889,56 L892,52 L895,56 Z" fill="#e02020"/><line x1="892" y1="54" x2="892" y2="64" stroke="#e02020" stroke-width="1.4"/><text x="877" y="80" font-family="Liberation Sans" font-weight="bold" font-size="10.5" fill="#90e020" textLength="30">NULL</text><path d="M915,64 L922,64 L918.5,68.5 Z" fill="#111"/><path d="M977,64 L984,64 L980.5,68.5 Z" fill="#111"/><path d="M1031,64 L1038,64 L1034.5,68.5 Z" fill="#111"/><rect x="939.5" y="52.5" width="29" height="27" fill="#fff" stroke="#7090c0" stroke-width="1"/><rect x="939.5" y="52.5" width="29" height="3" fill="#5a88d0"/><path d="M956.00,66.00 L957.95,66.82 L957.47,68.68 L955.36,68.44 L954.54,69.54 L955.33,71.50 L953.68,72.47 L952.36,70.81 L951.00,71.00 L950.18,72.95 L948.32,72.47 L948.56,70.36 L947.46,69.54 L945.50,70.33 L944.53,68.68 L946.19,67.36 L946.00,66.00 L944.05,65.18 L944.53,63.32 L946.64,63.56 L947.46,62.46 L946.67,60.50 L948.32,59.53 L949.64,61.19 L951.00,61.00 L951.82,59.05 L953.68,59.53 L953.44,61.64 L954.54,62.46 L956.50,61.67 L957.47,63.32 L955.81,64.64 Z M952.80,66.00 A1.8,1.8 0 1 0 949.20,66.00 A1.8,1.8 0 1 0 952.80,66.00 Z" fill="#d0d038" stroke="#808020" stroke-width="0.8" fill-rule="evenodd"/><path d="M963.60,72.00 L964.95,72.67 L964.50,74.17 L963.00,73.98 L962.24,74.81 L962.56,76.29 L961.11,76.87 L960.32,75.59 L959.20,75.51 L958.24,76.68 L956.88,75.91 L957.40,74.49 L956.76,73.56 L955.24,73.55 L955.00,72.00 L956.43,71.52 L956.76,70.44 L955.83,69.25 L956.88,68.09 L958.15,68.91 L959.20,68.49 L959.55,67.02 L961.11,67.13 L961.26,68.63 L962.24,69.19 L963.61,68.54 L964.50,69.83 L963.42,70.89 Z M961.30,72.00 A1.3,1.3 0 1 0 958.70,72.00 A1.3,1.3 0 1 0 961.30,72.00 Z" fill="#d0d038" stroke="#808020" stroke-width="0.8" fill-rule="evenodd"/><rect x="998" y="51" width="24" height="23" fill="#f8f8f8"/><rect x="998" y="51" width="24" height="3.6" fill="#4a80d0"/><rect x="1009" y="54.6" width="13" height="19.4" fill="#080808"/><line x1="999.5" y1="55" x2="999.5" y2="66" stroke="#909090" stroke-width="0.8"/><line x1="1002.1" y1="55" x2="1002.1" y2="66" stroke="#909090" stroke-width="0.8"/><line x1="1004.7" y1="55" x2="1004.7" y2="66" stroke="#909090" stroke-width="0.8"/><line x1="1007.3" y1="55" x2="1007.3" y2="66" stroke="#909090" stroke-width="0.8"/><line x1="1009" y1="56.5" x2="1022" y2="56.5" stroke="#e8e8e8" stroke-width="0.8"/><line x1="1009" y1="60.5" x2="1022" y2="60.5" stroke="#e8e8e8" stroke-width="0.8"/><line x1="1009" y1="64" x2="1022" y2="64" stroke="#e8e8e8" stroke-width="0.8"/><polyline points="1010,55.5 1014,56 1018,55 1021,56" fill="none" stroke="#e0e020" stroke-width="0.8"/><polyline points="1010,59 1014,59.5 1018,58.5 1021,59.5" fill="none" stroke="#30c030" stroke-width="0.8"/><path d="M1011,66 C1013,70 1016,71 1021,71" fill="none" stroke="#d8e020" stroke-width="1"/><path d="M1010,72 L1021,72" stroke="#2040a0" stroke-width="1"/><rect x="992" y="63" width="19.5" height="17.5" rx="3" fill="url(#camg)" stroke="#a0a0a0" stroke-width="0.5"/><ellipse cx="1002" cy="72.5" rx="4.5" ry="3.5" fill="#c0c0c0"/><ellipse cx="1002" cy="72.5" rx="2.6" ry="2" fill="#303030"/><rect x="1054.5" y="50.5" width="29.5" height="10" fill="#dde6f0" stroke="#7a8aa0" stroke-width="0.8"/><rect x="1055.5" y="51.5" width="27.5" height="2" fill="#2858c0"/><rect x="1056.0" y="53.5" width="8" height="6" fill="#a8d0e8" stroke="#2850a0" stroke-width="0.7"/><rect x="1065.3" y="53.5" width="8" height="6" fill="#a8d0e8" stroke="#2850a0" stroke-width="0.7"/><rect x="1074.6" y="53.5" width="8" height="6" fill="#a8d0e8" stroke="#2850a0" stroke-width="0.7"/><line x1="1054.5" y1="61" x2="1084" y2="61" stroke="#50c030" stroke-width="1.2"/><rect x="1054.5" y="67.5" width="13.5" height="12.8" rx="1.2" fill="#f6f6f6" stroke="#909aa4" stroke-width="0.8"/><rect x="1057.0" y="69" width="8.5" height="6" fill="#a8d0e8" stroke="#2850a0" stroke-width="0.7"/><rect x="1058.0" y="77" width="6.5" height="1.5" fill="#a03040"/><rect x="1069.3" y="67.5" width="13.5" height="12.8" rx="1.2" fill="#f6f6f6" stroke="#909aa4" stroke-width="0.8"/><rect x="1071.8" y="69" width="8.5" height="6" fill="#a8d0e8" stroke="#2850a0" stroke-width="0.7"/><rect x="1072.8" y="77" width="6.5" height="1.5" fill="#a03040"/><path d="M1065,58 L1071,64 L1069,66 L1077,69 L1075,61 L1073,63 L1067,57 Z" fill="#40c030" opacity="0.9"/></svg>
<div style="position:absolute;left:497px;top:60px;font-size:10.5px;line-height:1;color:#111;white-space:pre;">Measure</div>
<div style="position:absolute;left:675px;top:60px;font-size:10.5px;line-height:1;color:#111;white-space:pre;">Integ</div>
<div style="position:absolute;left:82px;top:87px;width:1247px;height:2px;background:#3c3c3c;"></div>
<div style="position:absolute;left:82px;top:89px;width:1247px;height:609px;background:#c2daea;"></div>
<div style="position:absolute;left:81px;top:89px;width:2px;height:609px;background:#4a5058;"></div>
<div style="position:absolute;left:83px;top:89px;width:310px;height:609px;background:linear-gradient(#acc8d6 0px,#b4d0de 12px,#bedaea 24px,#c4dcea 30px,#c2daea 100%);border-top:1px solid #f4f8fa;border-left:1px solid #eef4f8;"></div>
<div style="position:absolute;left:112px;top:102px;font-size:12.5px;line-height:1;color:#3a4d5e;white-space:pre;">NumericList</div>
<svg style="position:absolute;left:93px;top:100px" width="15" height="15"><rect x="0.5" y="0.5" width="14" height="14" fill="#fff" stroke="#3a5a8a"/><rect x="0.5" y="0.5" width="14" height="3" fill="#5a80c0"/><line x1="2" y1="6" x2="13" y2="6" stroke="#8898a8"/><line x1="2" y1="9" x2="13" y2="9" stroke="#8898a8"/><line x1="2" y1="12" x2="13" y2="12" stroke="#8898a8"/><text x="8" y="14" font-size="8" font-weight="bold" fill="#2a70d0" font-family="Liberation Serif">L</text></svg>
<div style="position:absolute;left:354.0px;top:99px;width:29.5px;height:15.5px;border:1px solid #8aa0b0;border-radius:3px;background:linear-gradient(rgba(255,255,255,0.35),rgba(255,255,255,0.1));box-shadow:inset 0 0 0 1px rgba(255,255,255,0.4);"></div>
<svg style="position:absolute;left:362.25px;top:102.5px" width="13" height="10"><path d="M3,2.2 L10,7.8 M10,2.2 L3,7.8" stroke="#34444e" stroke-width="3.6" stroke-linecap="round"/><path d="M3,2.2 L10,7.8 M10,2.2 L3,7.8" stroke="#f4f8fa" stroke-width="1.6" stroke-linecap="round"/></svg>
<div style="position:absolute;left:321.5px;top:99px;width:29.5px;height:15.5px;border:1px solid #8aa0b0;border-radius:3px;background:linear-gradient(rgba(255,255,255,0.35),rgba(255,255,255,0.1));box-shadow:inset 0 0 0 1px rgba(255,255,255,0.4);"></div>
<div style="position:absolute;left:331.25px;top:102px;width:10px;height:8px;background:#fff;border:1.3px solid #2e3e4e;border-radius:1px;"></div>
<div style="position:absolute;left:333.75px;top:104.5px;width:5px;height:2px;background:#2e3e4e;"></div>
<div style="position:absolute;left:289.0px;top:99px;width:29.5px;height:15.5px;border:1px solid #8aa0b0;border-radius:3px;background:linear-gradient(rgba(255,255,255,0.35),rgba(255,255,255,0.1));box-shadow:inset 0 0 0 1px rgba(255,255,255,0.4);"></div>
<div style="position:absolute;left:298.75px;top:106px;width:10px;height:5px;background:#fff;border:1.3px solid #2e3e4e;border-radius:1.5px;"></div>
<div style="position:absolute;left:92px;top:118px;width:292px;height:572px;background:#f0efee;border-top:1.5px solid #606468;border-left:1px solid #707478;"></div>
<div style="position:absolute;left:395px;top:89px;width:465px;height:264px;background:linear-gradient(#6aaaca 0px,#80b8d8 10px,#92c2e2 20px,#b0d0e4 28px,#90c2e0 30px,#8cc0e0 100%);border-top:1px solid #f4f8fa;border-left:1px solid #eef4f8;"></div>
<div style="position:absolute;left:423px;top:102px;font-size:12.5px;line-height:1;color:#3a4d5e;white-space:pre;">Numeric</div>
<svg style="position:absolute;left:404px;top:100px" width="15" height="15"><rect x="0.5" y="0.5" width="14" height="14" fill="#fff" stroke="#3a5a8a"/><rect x="0.5" y="0.5" width="14" height="3" fill="#5a80c0"/><line x1="2" y1="6" x2="13" y2="6" stroke="#8898a8"/><line x1="2" y1="9" x2="13" y2="9" stroke="#8898a8"/><line x1="2" y1="12" x2="13" y2="12" stroke="#8898a8"/></svg>
<div style="position:absolute;left:821.0px;top:99px;width:29.5px;height:15.5px;border:1px solid #8aa0b0;border-radius:3px;background:linear-gradient(rgba(255,255,255,0.35),rgba(255,255,255,0.1));box-shadow:inset 0 0 0 1px rgba(255,255,255,0.4);"></div>
<svg style="position:absolute;left:829.25px;top:102.5px" width="13" height="10"><path d="M3,2.2 L10,7.8 M10,2.2 L3,7.8" stroke="#34444e" stroke-width="3.6" stroke-linecap="round"/><path d="M3,2.2 L10,7.8 M10,2.2 L3,7.8" stroke="#f4f8fa" stroke-width="1.6" stroke-linecap="round"/></svg>
<div style="position:absolute;left:788.5px;top:99px;width:29.5px;height:15.5px;border:1px solid #8aa0b0;border-radius:3px;background:linear-gradient(rgba(255,255,255,0.35),rgba(255,255,255,0.1));box-shadow:inset 0 0 0 1px rgba(255,255,255,0.4);"></div>
<div style="position:absolute;left:798.25px;top:102px;width:10px;height:8px;background:#fff;border:1.3px solid #2e3e4e;border-radius:1px;"></div>
<div style="position:absolute;left:800.75px;top:104.5px;width:5px;height:2px;background:#2e3e4e;"></div>
<div style="position:absolute;left:756.0px;top:99px;width:29.5px;height:15.5px;border:1px solid #8aa0b0;border-radius:3px;background:linear-gradient(rgba(255,255,255,0.35),rgba(255,255,255,0.1));box-shadow:inset 0 0 0 1px rgba(255,255,255,0.4);"></div>
<div style="position:absolute;left:765.75px;top:106px;width:10px;height:5px;background:#fff;border:1.3px solid #2e3e4e;border-radius:1.5px;"></div>
<div style="position:absolute;left:403px;top:119px;width:449px;height:228px;background:#f0efee;border-top:1.5px solid #606468;border-left:1px solid #707478;"></div>
<div style="position:absolute;left:395px;top:355px;width:465px;height:152px;background:linear-gradient(#acc8d6 0px,#b4d0de 12px,#bedaea 24px,#c4dcea 30px,#c2daea 100%);border-top:1px solid #f4f8fa;border-left:1px solid #eef4f8;"></div>
<div style="position:absolute;left:424px;top:368px;font-size:12.5px;line-height:1;color:#3a4d5e;white-space:pre;">NumericMatrix</div>
<svg style="position:absolute;left:405px;top:366px" width="15" height="15"><rect x="0.5" y="0.5" width="14" height="14" fill="#fff" stroke="#3a5a8a"/><rect x="0.5" y="0.5" width="14" height="3" fill="#5a80c0"/><line x1="2" y1="6" x2="13" y2="6" stroke="#8898a8"/><line x1="2" y1="9" x2="13" y2="9" stroke="#8898a8"/><line x1="2" y1="12" x2="13" y2="12" stroke="#8898a8"/><text x="7" y="14" font-size="8" font-weight="bold" fill="#2a70d0" font-family="Liberation Serif">M</text></svg>
<div style="position:absolute;left:821.0px;top:365px;width:29.5px;height:15.5px;border:1px solid #8aa0b0;border-radius:3px;background:linear-gradient(rgba(255,255,255,0.35),rgba(255,255,255,0.1));box-shadow:inset 0 0 0 1px rgba(255,255,255,0.4);"></div>
<svg style="position:absolute;left:829.25px;top:368.5px" width="13" height="10"><path d="M3,2.2 L10,7.8 M10,2.2 L3,7.8" stroke="#34444e" stroke-width="3.6" stroke-linecap="round"/><path d="M3,2.2 L10,7.8 M10,2.2 L3,7.8" stroke="#f4f8fa" stroke-width="1.6" stroke-linecap="round"/></svg>
<div style="position:absolute;left:788.5px;top:365px;width:29.5px;height:15.5px;border:1px solid #8aa0b0;border-radius:3px;background:linear-gradient(rgba(255,255,255,0.35),rgba(255,255,255,0.1));box-shadow:inset 0 0 0 1px rgba(255,255,255,0.4);"></div>
<div style="position:absolute;left:798.25px;top:368px;width:10px;height:8px;background:#fff;border:1.3px solid #2e3e4e;border-radius:1px;"></div>
<div style="position:absolute;left:800.75px;top:370.5px;width:5px;height:2px;background:#2e3e4e;"></div>
<div style="position:absolute;left:756.0px;top:365px;width:29.5px;height:15.5px;border:1px solid #8aa0b0;border-radius:3px;background:linear-gradient(rgba(255,255,255,0.35),rgba(255,255,255,0.1));box-shadow:inset 0 0 0 1px rgba(255,255,255,0.4);"></div>
<div style="position:absolute;left:765.75px;top:372px;width:10px;height:5px;background:#fff;border:1.3px solid #2e3e4e;border-radius:1.5px;"></div>
<div style="position:absolute;left:404px;top:386px;width:447px;height:113px;background:#f0efee;border-top:1.5px solid #606468;border-left:1px solid #707478;"></div>
<div style="position:absolute;left:395px;top:509px;width:465px;height:189px;background:linear-gradient(#acc8d6 0px,#b4d0de 12px,#bedaea 24px,#c4dcea 30px,#c2daea 100%);border-top:1px solid #f4f8fa;border-left:1px solid #eef4f8;"></div>
<div style="position:absolute;left:424px;top:519px;font-size:12.5px;line-height:1;color:#3a4d5e;white-space:pre;">Bar</div>
<svg style="position:absolute;left:405px;top:517px" width="15" height="15"><rect width="14" height="14" fill="#111"/><rect x="2" y="4" width="1.5" height="10" fill="#e0e020"/><rect x="5" y="8" width="1.5" height="6" fill="#e0e020"/><rect x="8" y="6" width="1.5" height="8" fill="#e0e020"/><rect x="11" y="10" width="1.5" height="4" fill="#e0e020"/></svg>
<div style="position:absolute;left:821.0px;top:516px;width:29.5px;height:15.5px;border:1px solid #8aa0b0;border-radius:3px;background:linear-gradient(rgba(255,255,255,0.35),rgba(255,255,255,0.1));box-shadow:inset 0 0 0 1px rgba(255,255,255,0.4);"></div>
<svg style="position:absolute;left:829.25px;top:519.5px" width="13" height="10"><path d="M3,2.2 L10,7.8 M10,2.2 L3,7.8" stroke="#34444e" stroke-width="3.6" stroke-linecap="round"/><path d="M3,2.2 L10,7.8 M10,2.2 L3,7.8" stroke="#f4f8fa" stroke-width="1.6" stroke-linecap="round"/></svg>
<div style="position:absolute;left:788.5px;top:516px;width:29.5px;height:15.5px;border:1px solid #8aa0b0;border-radius:3px;background:linear-gradient(rgba(255,255,255,0.35),rgba(255,255,255,0.1));box-shadow:inset 0 0 0 1px rgba(255,255,255,0.4);"></div>
<div style="position:absolute;left:798.25px;top:519px;width:10px;height:8px;background:#fff;border:1.3px solid #2e3e4e;border-radius:1px;"></div>
<div style="position:absolute;left:800.75px;top:521.5px;width:5px;height:2px;background:#2e3e4e;"></div>
<div style="position:absolute;left:756.0px;top:516px;width:29.5px;height:15.5px;border:1px solid #8aa0b0;border-radius:3px;background:linear-gradient(rgba(255,255,255,0.35),rgba(255,255,255,0.1));box-shadow:inset 0 0 0 1px rgba(255,255,255,0.4);"></div>
<div style="position:absolute;left:765.75px;top:523px;width:10px;height:5px;background:#fff;border:1.3px solid #2e3e4e;border-radius:1.5px;"></div>
<div style="position:absolute;left:404px;top:536px;width:447px;height:162px;background:#f0efee;border-top:1.5px solid #606468;border-left:1px solid #707478;"></div>
<div style="position:absolute;left:862px;top:89px;width:465px;height:264px;background:linear-gradient(#acc8d6 0px,#b4d0de 12px,#bedaea 24px,#c4dcea 30px,#c2daea 100%);border-top:1px solid #f4f8fa;border-left:1px solid #eef4f8;"></div>
<div style="position:absolute;left:890px;top:102px;font-size:12.5px;line-height:1;color:#3a4d5e;white-space:pre;">Vector</div>
<svg style="position:absolute;left:871px;top:100px" width="15" height="15"><rect width="14" height="14" fill="#111"/><circle cx="7" cy="7" r="5" fill="none" stroke="#999"/><circle cx="7" cy="7" r="2" fill="none" stroke="#999"/></svg>
<div style="position:absolute;left:1288.0px;top:99px;width:29.5px;height:15.5px;border:1px solid #8aa0b0;border-radius:3px;background:linear-gradient(rgba(255,255,255,0.35),rgba(255,255,255,0.1));box-shadow:inset 0 0 0 1px rgba(255,255,255,0.4);"></div>
<svg style="position:absolute;left:1296.25px;top:102.5px" width="13" height="10"><path d="M3,2.2 L10,7.8 M10,2.2 L3,7.8" stroke="#34444e" stroke-width="3.6" stroke-linecap="round"/><path d="M3,2.2 L10,7.8 M10,2.2 L3,7.8" stroke="#f4f8fa" stroke-width="1.6" stroke-linecap="round"/></svg>
<div style="position:absolute;left:1255.5px;top:99px;width:29.5px;height:15.5px;border:1px solid #8aa0b0;border-radius:3px;background:linear-gradient(rgba(255,255,255,0.35),rgba(255,255,255,0.1));box-shadow:inset 0 0 0 1px rgba(255,255,255,0.4);"></div>
<div style="position:absolute;left:1265.25px;top:102px;width:10px;height:8px;background:#fff;border:1.3px solid #2e3e4e;border-radius:1px;"></div>
<div style="position:absolute;left:1267.75px;top:104.5px;width:5px;height:2px;background:#2e3e4e;"></div>
<div style="position:absolute;left:1223.0px;top:99px;width:29.5px;height:15.5px;border:1px solid #8aa0b0;border-radius:3px;background:linear-gradient(rgba(255,255,255,0.35),rgba(255,255,255,0.1));box-shadow:inset 0 0 0 1px rgba(255,255,255,0.4);"></div>
<div style="position:absolute;left:1232.75px;top:106px;width:10px;height:5px;background:#fff;border:1.3px solid #2e3e4e;border-radius:1.5px;"></div>
<div style="position:absolute;left:870px;top:119px;width:447px;height:228px;background:#f0efee;border-top:1.5px solid #606468;border-left:1px solid #707478;"></div>
<div style="position:absolute;left:862px;top:355px;width:465px;height:152px;background:linear-gradient(#acc8d6 0px,#b4d0de 12px,#bedaea 24px,#c4dcea 30px,#c2daea 100%);border-top:1px solid #f4f8fa;border-left:1px solid #eef4f8;"></div>
<div style="position:absolute;left:890px;top:368px;font-size:12.5px;line-height:1;color:#3a4d5e;white-space:pre;">Trend</div>
<svg style="position:absolute;left:871px;top:366px" width="15" height="15"><rect width="14" height="14" fill="#111"/><polyline points="1,6 4,4 7,5 10,3 13,2" fill="none" stroke="#e0e020"/><rect x="1" y="9" width="12" height="4" fill="#20b040"/></svg>
<div style="position:absolute;left:1288.0px;top:365px;width:29.5px;height:15.5px;border:1px solid #8aa0b0;border-radius:3px;background:linear-gradient(rgba(255,255,255,0.35),rgba(255,255,255,0.1));box-shadow:inset 0 0 0 1px rgba(255,255,255,0.4);"></div>
<svg style="position:absolute;left:1296.25px;top:368.5px" width="13" height="10"><path d="M3,2.2 L10,7.8 M10,2.2 L3,7.8" stroke="#34444e" stroke-width="3.6" stroke-linecap="round"/><path d="M3,2.2 L10,7.8 M10,2.2 L3,7.8" stroke="#f4f8fa" stroke-width="1.6" stroke-linecap="round"/></svg>
<div style="position:absolute;left:1255.5px;top:365px;width:29.5px;height:15.5px;border:1px solid #8aa0b0;border-radius:3px;background:linear-gradient(rgba(255,255,255,0.35),rgba(255,255,255,0.1));box-shadow:inset 0 0 0 1px rgba(255,255,255,0.4);"></div>
<div style="position:absolute;left:1265.25px;top:368px;width:10px;height:8px;background:#fff;border:1.3px solid #2e3e4e;border-radius:1px;"></div>
<div style="position:absolute;left:1267.75px;top:370.5px;width:5px;height:2px;background:#2e3e4e;"></div>
<div style="position:absolute;left:1223.0px;top:365px;width:29.5px;height:15.5px;border:1px solid #8aa0b0;border-radius:3px;background:linear-gradient(rgba(255,255,255,0.35),rgba(255,255,255,0.1));box-shadow:inset 0 0 0 1px rgba(255,255,255,0.4);"></div>
<div style="position:absolute;left:1232.75px;top:372px;width:10px;height:5px;background:#fff;border:1.3px solid #2e3e4e;border-radius:1.5px;"></div>
<div style="position:absolute;left:870px;top:386px;width:447px;height:113px;background:#f0efee;border-top:1.5px solid #606468;border-left:1px solid #707478;"></div>
<div style="position:absolute;left:862px;top:509px;width:465px;height:189px;background:linear-gradient(#acc8d6 0px,#b4d0de 12px,#bedaea 24px,#c4dcea 30px,#c2daea 100%);border-top:1px solid #f4f8fa;border-left:1px solid #eef4f8;"></div>
<div style="position:absolute;left:890px;top:519px;font-size:12.5px;line-height:1;color:#3a4d5e;white-space:pre;">Wave</div>
<svg style="position:absolute;left:871px;top:517px" width="15" height="15"><rect width="14" height="14" fill="#111"/><path d="M1,11 C3,1 5,1 7,7 C9,13 11,13 13,3" fill="none" stroke="#e0e020" stroke-width="1.5"/></svg>
<div style="position:absolute;left:1288.0px;top:516px;width:29.5px;height:15.5px;border:1px solid #8aa0b0;border-radius:3px;background:linear-gradient(rgba(255,255,255,0.35),rgba(255,255,255,0.1));box-shadow:inset 0 0 0 1px rgba(255,255,255,0.4);"></div>
<svg style="position:absolute;left:1296.25px;top:519.5px" width="13" height="10"><path d="M3,2.2 L10,7.8 M10,2.2 L3,7.8" stroke="#34444e" stroke-width="3.6" stroke-linecap="round"/><path d="M3,2.2 L10,7.8 M10,2.2 L3,7.8" stroke="#f4f8fa" stroke-width="1.6" stroke-linecap="round"/></svg>
<div style="position:absolute;left:1255.5px;top:516px;width:29.5px;height:15.5px;border:1px solid #8aa0b0;border-radius:3px;background:linear-gradient(rgba(255,255,255,0.35),rgba(255,255,255,0.1));box-shadow:inset 0 0 0 1px rgba(255,255,255,0.4);"></div>
<div style="position:absolute;left:1265.25px;top:519px;width:10px;height:8px;background:#fff;border:1.3px solid #2e3e4e;border-radius:1px;"></div>
<div style="position:absolute;left:1267.75px;top:521.5px;width:5px;height:2px;background:#2e3e4e;"></div>
<div style="position:absolute;left:1223.0px;top:516px;width:29.5px;height:15.5px;border:1px solid #8aa0b0;border-radius:3px;background:linear-gradient(rgba(255,255,255,0.35),rgba(255,255,255,0.1));box-shadow:inset 0 0 0 1px rgba(255,255,255,0.4);"></div>
<div style="position:absolute;left:1232.75px;top:523px;width:10px;height:5px;background:#fff;border:1.3px solid #2e3e4e;border-radius:1.5px;"></div>
<div style="position:absolute;left:870px;top:537px;width:447px;height:161px;background:#f0efee;border-top:1.5px solid #606468;border-left:1px solid #707478;"></div>
<div style="position:absolute;left:393px;top:89px;width:2px;height:609px;background:#202428;"></div>
<div style="position:absolute;left:860px;top:89px;width:2px;height:609px;background:#202428;"></div>
<div style="position:absolute;left:395px;top:353px;width:934px;height:2px;background:#30363c;"></div>
<div style="position:absolute;left:395px;top:507px;width:934px;height:2px;background:#30363c;"></div>
<div style="position:absolute;left:395px;top:351px;width:465px;height:1.5px;background:#20a8c8;"></div>
<div style="position:absolute;left:858.5px;top:89px;width:1.5px;height:264px;background:#20a8c8;"></div>
<div style="position:absolute;left:92px;top:118px;width:292px;height:572px;background:#c2daea;"></div>
<div style="position:absolute;left:92px;top:119px;width:292px;height:50px;background:#fff;border:2px solid #5a5e62;"></div>
<div style="position:absolute;left:94px;top:121px;width:288px;height:23px;background:linear-gradient(#ffffff,#f2f4f6);"></div>
<div style="position:absolute;left:94px;top:144px;width:288px;height:1px;background:#e8e8e8;"></div>
<div style="position:absolute;left:170px;top:121px;width:1px;height:42px;background:#e6e6e6;"></div>
<div style="position:absolute;left:241.5px;top:121px;width:1px;height:42px;background:#e6e6e6;"></div>
<div style="position:absolute;left:314px;top:121px;width:1px;height:42px;background:#e6e6e6;"></div>
<div style="position:absolute;left:94px;top:163px;width:288px;height:1px;background:#ececec;"></div>
<div style="position:absolute;right:1164px;top:149px;font-size:12px;line-height:1;color:#111;white-space:pre;text-align:right;">49.951</div>
<div style="position:absolute;right:1096px;top:149px;font-size:12px;line-height:1;color:#111;white-space:pre;text-align:right;">4.4035</div>
<div style="position:absolute;right:1024px;top:149px;font-size:12px;line-height:1;color:#111;white-space:pre;text-align:right;">26.4983</div>
<div style="position:absolute;left:92px;top:174px;width:292px;height:517px;background:#fff;border:2px solid #5a5e62;"></div>
<div style="position:absolute;left:94px;top:176px;width:273px;height:24.5px;background:linear-gradient(#ffffff,#f2f4f6);"></div>
<div style="position:absolute;left:129.5px;top:176px;width:1px;height:513px;background:#e6e6e6;"></div>
<div style="position:absolute;left:200.5px;top:176px;width:1px;height:513px;background:#e6e6e6;"></div>
<div style="position:absolute;left:273.5px;top:176px;width:1px;height:513px;background:#e6e6e6;"></div>
<div style="position:absolute;left:101.5px;top:203.5px;font-size:12px;line-height:1;color:#111;white-space:pre;">Total</div>
<div style="position:absolute;right:1138px;top:203.5px;font-size:12px;line-height:1;color:#111;white-space:pre;text-align:right;">100.004</div>
<div style="position:absolute;right:1066.5px;top:203.5px;font-size:12px;line-height:1;color:#111;white-space:pre;text-align:right;">0.64761</div>
<div style="position:absolute;left:94px;top:217.35000000000002px;width:273px;height:1px;background:#ebebeb;"></div>
<div style="position:absolute;left:101.5px;top:221.05px;font-size:12px;line-height:1;color:#111;white-space:pre;">DC</div>
<div style="position:absolute;right:1133px;top:221.05px;font-size:12px;line-height:1;color:#111;white-space:pre;text-align:right;">---------</div>
<div style="position:absolute;right:1061.5px;top:221.05px;font-size:12px;line-height:1;color:#111;white-space:pre;text-align:right;">---------</div>
<div style="position:absolute;left:94px;top:234.9px;width:273px;height:1px;background:#ebebeb;"></div>
<div style="position:absolute;left:101.5px;top:238.6px;font-size:12px;line-height:1;color:#111;white-space:pre;">1</div>
<div style="position:absolute;right:1138px;top:238.6px;font-size:12px;line-height:1;color:#111;white-space:pre;text-align:right;">99.935</div>
<div style="position:absolute;right:1066.5px;top:238.6px;font-size:12px;line-height:1;color:#111;white-space:pre;text-align:right;">0.62458</div>
<div style="position:absolute;left:94px;top:252.45px;width:273px;height:1px;background:#ebebeb;"></div>
<div style="position:absolute;left:101.5px;top:256.15px;font-size:12px;line-height:1;color:#111;white-space:pre;">2</div>
<div style="position:absolute;right:1138px;top:256.15px;font-size:12px;line-height:1;color:#111;white-space:pre;text-align:right;">0.005</div>
<div style="position:absolute;right:1066.5px;top:256.15px;font-size:12px;line-height:1;color:#111;white-space:pre;text-align:right;">0.00014</div>
<div style="position:absolute;left:94px;top:270.0px;width:273px;height:1px;background:#ebebeb;"></div>
<div style="position:absolute;left:101.5px;top:273.7px;font-size:12px;line-height:1;color:#111;white-space:pre;">3</div>
<div style="position:absolute;right:1138px;top:273.7px;font-size:12px;line-height:1;color:#111;white-space:pre;text-align:right;">2.606</div>
<div style="position:absolute;right:1066.5px;top:273.7px;font-size:12px;line-height:1;color:#111;white-space:pre;text-align:right;">0.15972</div>
<div style="position:absolute;left:94px;top:287.55px;width:273px;height:1px;background:#ebebeb;"></div>
<div style="position:absolute;left:101.5px;top:291.25px;font-size:12px;line-height:1;color:#111;white-space:pre;">4</div>
<div style="position:absolute;right:1138px;top:291.25px;font-size:12px;line-height:1;color:#111;white-space:pre;text-align:right;">0.007</div>
<div style="position:absolute;right:1066.5px;top:291.25px;font-size:12px;line-height:1;color:#111;white-space:pre;text-align:right;">0.00012</div>
<div style="position:absolute;left:94px;top:305.1px;width:273px;height:1px;background:#ebebeb;"></div>
<div style="position:absolute;left:101.5px;top:308.8px;font-size:12px;line-height:1;color:#111;white-space:pre;">5</div>
<div style="position:absolute;right:1138px;top:308.8px;font-size:12px;line-height:1;color:#111;white-space:pre;text-align:right;">2.045</div>
<div style="position:absolute;right:1066.5px;top:308.8px;font-size:12px;line-height:1;color:#111;white-space:pre;text-align:right;">0.04800</div>
<div style="position:absolute;left:94px;top:322.65000000000003px;width:273px;height:1px;background:#ebebeb;"></div>
<div style="position:absolute;left:101.5px;top:326.35px;font-size:12px;line-height:1;color:#111;white-space:pre;">6</div>
<div style="position:absolute;right:1138px;top:326.35px;font-size:12px;line-height:1;color:#111;white-space:pre;text-align:right;">0.020</div>
<div style="position:absolute;right:1066.5px;top:326.35px;font-size:12px;line-height:1;color:#111;white-space:pre;text-align:right;">0.00024</div>
<div style="position:absolute;left:94px;top:340.2px;width:273px;height:1px;background:#ebebeb;"></div>
<div style="position:absolute;left:101.5px;top:343.9px;font-size:12px;line-height:1;color:#111;white-space:pre;">7</div>
<div style="position:absolute;right:1138px;top:343.9px;font-size:12px;line-height:1;color:#111;white-space:pre;text-align:right;">2.397</div>
<div style="position:absolute;right:1066.5px;top:343.9px;font-size:12px;line-height:1;color:#111;white-space:pre;text-align:right;">0.02220</div>
<div style="position:absolute;left:94px;top:357.75000000000006px;width:273px;height:1px;background:#ebebeb;"></div>
<div style="position:absolute;left:101.5px;top:361.45000000000005px;font-size:12px;line-height:1;color:#111;white-space:pre;">8</div>
<div style="position:absolute;right:1138px;top:361.45000000000005px;font-size:12px;line-height:1;color:#111;white-space:pre;text-align:right;">0.004</div>
<div style="position:absolute;right:1066.5px;top:361.45000000000005px;font-size:12px;line-height:1;color:#111;white-space:pre;text-align:right;">0.00013</div>
<div style="position:absolute;left:94px;top:375.3px;width:273px;height:1px;background:#ebebeb;"></div>
<div style="position:absolute;left:101.5px;top:379.0px;font-size:12px;line-height:1;color:#111;white-space:pre;">9</div>
<div style="position:absolute;right:1138px;top:379.0px;font-size:12px;line-height:1;color:#111;white-space:pre;text-align:right;">0.998</div>
<div style="position:absolute;right:1066.5px;top:379.0px;font-size:12px;line-height:1;color:#111;white-space:pre;text-align:right;">0.02151</div>
<div style="position:absolute;left:94px;top:392.85px;width:273px;height:1px;background:#ebebeb;"></div>
<div style="position:absolute;left:101.5px;top:396.55px;font-size:12px;line-height:1;color:#111;white-space:pre;">10</div>
<div style="position:absolute;right:1138px;top:396.55px;font-size:12px;line-height:1;color:#111;white-space:pre;text-align:right;">0.015</div>
<div style="position:absolute;right:1066.5px;top:396.55px;font-size:12px;line-height:1;color:#111;white-space:pre;text-align:right;">0.00017</div>
<div style="position:absolute;left:94px;top:410.40000000000003px;width:273px;height:1px;background:#ebebeb;"></div>
<div style="position:absolute;left:101.5px;top:414.1px;font-size:12px;line-height:1;color:#111;white-space:pre;">11</div>
<div style="position:absolute;right:1138px;top:414.1px;font-size:12px;line-height:1;color:#111;white-space:pre;text-align:right;">0.818</div>
<div style="position:absolute;right:1066.5px;top:414.1px;font-size:12px;line-height:1;color:#111;white-space:pre;text-align:right;">0.01500</div>
<div style="position:absolute;left:94px;top:427.95px;width:273px;height:1px;background:#ebebeb;"></div>
<div style="position:absolute;left:101.5px;top:431.65px;font-size:12px;line-height:1;color:#111;white-space:pre;">12</div>
<div style="position:absolute;right:1138px;top:431.65px;font-size:12px;line-height:1;color:#111;white-space:pre;text-align:right;">0.016</div>
<div style="position:absolute;right:1066.5px;top:431.65px;font-size:12px;line-height:1;color:#111;white-space:pre;text-align:right;">0.00018</div>
<div style="position:absolute;left:94px;top:445.50000000000006px;width:273px;height:1px;background:#ebebeb;"></div>
<div style="position:absolute;left:101.5px;top:449.20000000000005px;font-size:12px;line-height:1;color:#111;white-space:pre;">13</div>
<div style="position:absolute;right:1138px;top:449.20000000000005px;font-size:12px;line-height:1;color:#111;white-space:pre;text-align:right;">0.829</div>
<div style="position:absolute;right:1066.5px;top:449.20000000000005px;font-size:12px;line-height:1;color:#111;white-space:pre;text-align:right;">0.01312</div>
<div style="position:absolute;left:94px;top:463.05px;width:273px;height:1px;background:#ebebeb;"></div>
<div style="position:absolute;left:101.5px;top:466.75px;font-size:12px;line-height:1;color:#111;white-space:pre;">14</div>
<div style="position:absolute;right:1138px;top:466.75px;font-size:12px;line-height:1;color:#111;white-space:pre;text-align:right;">0.005</div>
<div style="position:absolute;right:1066.5px;top:466.75px;font-size:12px;line-height:1;color:#111;white-space:pre;text-align:right;">0.00007</div>
<div style="position:absolute;left:94px;top:480.6px;width:273px;height:1px;background:#ebebeb;"></div>
<div style="position:absolute;left:101.5px;top:484.3px;font-size:12px;line-height:1;color:#111;white-space:pre;">15</div>
<div style="position:absolute;right:1138px;top:484.3px;font-size:12px;line-height:1;color:#111;white-space:pre;text-align:right;">0.324</div>
<div style="position:absolute;right:1066.5px;top:484.3px;font-size:12px;line-height:1;color:#111;white-space:pre;text-align:right;">0.00802</div>
<div style="position:absolute;left:94px;top:498.15000000000003px;width:273px;height:1px;background:#ebebeb;"></div>
<div style="position:absolute;left:101.5px;top:501.85px;font-size:12px;line-height:1;color:#111;white-space:pre;">16</div>
<div style="position:absolute;right:1138px;top:501.85px;font-size:12px;line-height:1;color:#111;white-space:pre;text-align:right;">0.008</div>
<div style="position:absolute;right:1066.5px;top:501.85px;font-size:12px;line-height:1;color:#111;white-space:pre;text-align:right;">0.00019</div>
<div style="position:absolute;left:94px;top:515.7px;width:273px;height:1px;background:#ebebeb;"></div>
<div style="position:absolute;left:101.5px;top:519.4000000000001px;font-size:12px;line-height:1;color:#111;white-space:pre;">17</div>
<div style="position:absolute;right:1138px;top:519.4000000000001px;font-size:12px;line-height:1;color:#111;white-space:pre;text-align:right;">0.183</div>
<div style="position:absolute;right:1066.5px;top:519.4000000000001px;font-size:12px;line-height:1;color:#111;white-space:pre;text-align:right;">0.00440</div>
<div style="position:absolute;left:94px;top:533.25px;width:273px;height:1px;background:#ebebeb;"></div>
<div style="position:absolute;left:101.5px;top:536.95px;font-size:12px;line-height:1;color:#111;white-space:pre;">18</div>
<div style="position:absolute;right:1138px;top:536.95px;font-size:12px;line-height:1;color:#111;white-space:pre;text-align:right;">0.008</div>
<div style="position:absolute;right:1066.5px;top:536.95px;font-size:12px;line-height:1;color:#111;white-space:pre;text-align:right;">0.00007</div>
<div style="position:absolute;left:94px;top:550.8px;width:273px;height:1px;background:#ebebeb;"></div>
<div style="position:absolute;left:101.5px;top:554.5px;font-size:12px;line-height:1;color:#111;white-space:pre;">19</div>
<div style="position:absolute;right:1138px;top:554.5px;font-size:12px;line-height:1;color:#111;white-space:pre;text-align:right;">0.257</div>
<div style="position:absolute;right:1066.5px;top:554.5px;font-size:12px;line-height:1;color:#111;white-space:pre;text-align:right;">0.00767</div>
<div style="position:absolute;left:94px;top:568.3499999999999px;width:273px;height:1px;background:#ebebeb;"></div>
<div style="position:absolute;left:101.5px;top:572.05px;font-size:12px;line-height:1;color:#111;white-space:pre;">20</div>
<div style="position:absolute;right:1138px;top:572.05px;font-size:12px;line-height:1;color:#111;white-space:pre;text-align:right;">0.008</div>
<div style="position:absolute;right:1066.5px;top:572.05px;font-size:12px;line-height:1;color:#111;white-space:pre;text-align:right;">0.00020</div>
<div style="position:absolute;left:94px;top:585.9px;width:273px;height:1px;background:#ebebeb;"></div>
<div style="position:absolute;left:101.5px;top:589.6px;font-size:12px;line-height:1;color:#111;white-space:pre;">21</div>
<div style="position:absolute;right:1138px;top:589.6px;font-size:12px;line-height:1;color:#111;white-space:pre;text-align:right;">0.222</div>
<div style="position:absolute;right:1066.5px;top:589.6px;font-size:12px;line-height:1;color:#111;white-space:pre;text-align:right;">0.00612</div>
<div style="position:absolute;left:94px;top:603.45px;width:273px;height:1px;background:#ebebeb;"></div>
<div style="position:absolute;left:101.5px;top:607.1500000000001px;font-size:12px;line-height:1;color:#111;white-space:pre;">22</div>
<div style="position:absolute;right:1138px;top:607.1500000000001px;font-size:12px;line-height:1;color:#111;white-space:pre;text-align:right;">0.009</div>
<div style="position:absolute;right:1066.5px;top:607.1500000000001px;font-size:12px;line-height:1;color:#111;white-space:pre;text-align:right;">0.00017</div>
<div style="position:absolute;left:94px;top:621.0px;width:273px;height:1px;background:#ebebeb;"></div>
<div style="position:absolute;left:101.5px;top:624.7px;font-size:12px;line-height:1;color:#111;white-space:pre;">23</div>
<div style="position:absolute;right:1138px;top:624.7px;font-size:12px;line-height:1;color:#111;white-space:pre;text-align:right;">0.122</div>
<div style="position:absolute;right:1066.5px;top:624.7px;font-size:12px;line-height:1;color:#111;white-space:pre;text-align:right;">0.00077</div>
<div style="position:absolute;left:94px;top:638.55px;width:273px;height:1px;background:#ebebeb;"></div>
<div style="position:absolute;left:101.5px;top:642.25px;font-size:12px;line-height:1;color:#111;white-space:pre;">24</div>
<div style="position:absolute;right:1138px;top:642.25px;font-size:12px;line-height:1;color:#111;white-space:pre;text-align:right;">0.007</div>
<div style="position:absolute;right:1066.5px;top:642.25px;font-size:12px;line-height:1;color:#111;white-space:pre;text-align:right;">0.00020</div>
<div style="position:absolute;left:94px;top:656.0999999999999px;width:273px;height:1px;background:#ebebeb;"></div>
<div style="position:absolute;left:101.5px;top:659.8px;font-size:12px;line-height:1;color:#111;white-space:pre;">25</div>
<div style="position:absolute;right:1138px;top:659.8px;font-size:12px;line-height:1;color:#111;white-space:pre;text-align:right;">0.152</div>
<div style="position:absolute;right:1066.5px;top:659.8px;font-size:12px;line-height:1;color:#111;white-space:pre;text-align:right;">0.00392</div>
<div style="position:absolute;left:94px;top:673.65px;width:273px;height:1px;background:#ebebeb;"></div>
<div style="position:absolute;left:101.5px;top:677.35px;font-size:12px;line-height:1;color:#111;white-space:pre;">26</div>
<div style="position:absolute;right:1138px;top:677.35px;font-size:12px;line-height:1;color:#111;white-space:pre;text-align:right;">0.006</div>
<div style="position:absolute;right:1066.5px;top:677.35px;font-size:12px;line-height:1;color:#111;white-space:pre;text-align:right;">0.00023</div>
<div style="position:absolute;left:94px;top:689px;width:290px;height:2px;background:#5a5e62;"></div>
<div style="position:absolute;left:367px;top:176px;width:15px;height:513px;background:linear-gradient(90deg,#f0f0f0,#fafafa);"></div>
<svg style="position:absolute;left:367px;top:176px" width="15" height="513"><path d="M4.5,9 L7.5,5.5 L10.5,9 Z" fill="#404040"/><path d="M4.5,504 L7.5,507.5 L10.5,504 Z" fill="#404040"/></svg>
<div style="position:absolute;left:368.5px;top:196px;width:12px;height:247px;background:linear-gradient(90deg,#e8e8e8,#f4f4f4 40%,#dcdcdc);border:1px solid #9a9a9a;border-radius:2px;"></div>
<div style="position:absolute;left:372px;top:316.0px;width:6px;height:1px;background:#606060;"></div>
<div style="position:absolute;left:372px;top:318.5px;width:6px;height:1px;background:#606060;"></div>
<div style="position:absolute;left:372px;top:321.0px;width:6px;height:1px;background:#606060;"></div>
<div style="position:absolute;left:416px;top:126px;width:33px;height:30px;background:linear-gradient(#fafafa,#e4e4e4);border:1px solid #7a7a7a;border-radius:3px;"></div>
<svg style="position:absolute;left:0;top:0" width="460" height="160"><rect x="421.5" y="130.5" width="22.5" height="22" fill="#fff" stroke="#3a5a9a"/><rect x="421.5" y="130.5" width="22.5" height="3.5" fill="#4a78c8"/><path d="M436.00,141.90 L437.95,142.75 L437.45,144.66 L435.34,144.44 L434.48,145.58 L435.26,147.55 L433.56,148.55 L432.21,146.90 L430.80,147.10 L429.95,149.05 L428.04,148.55 L428.26,146.44 L427.12,145.58 L425.15,146.36 L424.15,144.66 L425.80,143.31 L425.60,141.90 L423.65,141.05 L424.15,139.14 L426.26,139.36 L427.12,138.22 L426.34,136.25 L428.04,135.25 L429.39,136.90 L430.80,136.70 L431.65,134.75 L433.56,135.25 L433.34,137.36 L434.48,138.22 L436.45,137.44 L437.45,139.14 L435.80,140.49 Z M432.60,141.90 A1.8,1.8 0 1 0 429.00,141.90 A1.8,1.8 0 1 0 432.60,141.90 Z" fill="#c8cc30" stroke="#707020" stroke-width="0.8" fill-rule="evenodd"/><path d="M442.10,146.00 L443.45,146.67 L443.00,148.17 L441.50,147.98 L440.74,148.81 L441.06,150.29 L439.61,150.87 L438.82,149.59 L437.70,149.51 L436.74,150.68 L435.38,149.91 L435.90,148.49 L435.26,147.56 L433.74,147.55 L433.50,146.00 L434.93,145.52 L435.26,144.44 L434.33,143.25 L435.38,142.09 L436.65,142.91 L437.70,142.49 L438.05,141.02 L439.61,141.13 L439.76,142.63 L440.74,143.19 L442.11,142.54 L443.00,143.83 L441.92,144.89 Z M439.80,146.00 A1.3,1.3 0 1 0 437.20,146.00 A1.3,1.3 0 1 0 439.80,146.00 Z" fill="#c8cc30" stroke="#707020" stroke-width="0.8" fill-rule="evenodd"/></svg>
<div style="position:absolute;left:459px;top:131px;width:90px;height:20px;background:linear-gradient(#fbfbfb,#f0f0f0 50%,#dcdcdc);border:1px solid #6a6a6a;border-radius:3px;"></div>
<div style="position:absolute;left:463px;top:135.5px;font-size:10.5px;line-height:1;color:#111;white-space:pre;">AutoSaving</div>
<svg style="position:absolute;left:535.5px;top:138px" width="9" height="6"><path d="M0.5,0.5 L8.5,0.5 L4.5,5 Z" fill="#111"/></svg>
<div style="position:absolute;left:561px;top:131px;width:84px;height:20px;background:linear-gradient(#fbfbfb,#f0f0f0 50%,#dcdcdc);border:1px solid #6a6a6a;border-radius:3px;"></div>
<div style="position:absolute;left:565px;top:135.5px;font-size:10.5px;line-height:1;color:#111;white-space:pre;">UpdateRate</div>
<svg style="position:absolute;left:631.5px;top:138px" width="9" height="6"><path d="M0.5,0.5 L8.5,0.5 L4.5,5 Z" fill="#111"/></svg>
<div style="position:absolute;left:653px;top:131px;width:35px;height:21px;background:#f6f6f6;border:1px solid #b8b8b8;"></div>
<div style="position:absolute;left:661px;top:136px;font-size:10.5px;line-height:1;color:#a0a0a0;white-space:pre;">0</div>
<div style="position:absolute;left:672px;top:133px;width:13px;height:8px;background:#eee;border:1px solid #c0c0c0;"></div>
<div style="position:absolute;left:672px;top:142px;width:13px;height:8px;background:#eee;border:1px solid #c0c0c0;"></div>
<svg style="position:absolute;left:672px;top:133px" width="13" height="17"><path d="M4.5,5.5 L6.5,3 L8.5,5.5 Z" fill="#a0a0a0"/><path d="M4.5,11.5 L6.5,14 L8.5,11.5 Z" fill="#a0a0a0"/></svg>
<div style="position:absolute;left:698px;top:131px;width:35px;height:21px;background:#f6f6f6;border:1px solid #b8b8b8;"></div>
<div style="position:absolute;left:706px;top:136px;font-size:10.5px;line-height:1;color:#a0a0a0;white-space:pre;">0</div>
<div style="position:absolute;left:717px;top:133px;width:13px;height:8px;background:#eee;border:1px solid #c0c0c0;"></div>
<div style="position:absolute;left:717px;top:142px;width:13px;height:8px;background:#eee;border:1px solid #c0c0c0;"></div>
<svg style="position:absolute;left:717px;top:133px" width="13" height="17"><path d="M4.5,5.5 L6.5,3 L8.5,5.5 Z" fill="#a0a0a0"/><path d="M4.5,11.5 L6.5,14 L8.5,11.5 Z" fill="#a0a0a0"/></svg>
<div style="position:absolute;left:744.5px;top:131px;width:35px;height:21px;background:#f6f6f6;border:1px solid #b8b8b8;"></div>
<div style="position:absolute;left:752.5px;top:136px;font-size:10.5px;line-height:1;color:#a0a0a0;white-space:pre;">2</div>
<div style="position:absolute;left:763.5px;top:133px;width:13px;height:8px;background:#eee;border:1px solid #c0c0c0;"></div>
<div style="position:absolute;left:763.5px;top:142px;width:13px;height:8px;background:#eee;border:1px solid #c0c0c0;"></div>
<svg style="position:absolute;left:763.5px;top:133px" width="13" height="17"><path d="M4.5,5.5 L6.5,3 L8.5,5.5 Z" fill="#a0a0a0"/><path d="M4.5,11.5 L6.5,14 L8.5,11.5 Z" fill="#a0a0a0"/></svg>
<div style="position:absolute;left:692px;top:136px;font-size:11px;line-height:1;color:#222;white-space:pre;font-weight:bold;">:</div>
<div style="position:absolute;left:738px;top:136px;font-size:11px;line-height:1;color:#222;white-space:pre;font-weight:bold;">:</div>
<div style="position:absolute;left:798px;top:136px;font-size:10.5px;line-height:1;color:#111;white-space:pre;">Stop Timer</div>
<div style="position:absolute;left:414px;top:160px;width:437px;height:185px;background:#fff;border:1px solid #8a8e92;border-top:1.5px solid #6a6e72;"></div>
<div style="position:absolute;left:415px;top:161px;width:420px;height:23px;background:linear-gradient(#ffffff,#f2f4f6);"></div>
<div style="position:absolute;left:415px;top:184px;width:420px;height:1px;background:#e6e6e6;"></div>
<div style="position:absolute;left:450.5px;top:161px;width:1px;height:183px;background:#e8e8e8;"></div>
<div style="position:absolute;left:517.5px;top:161px;width:1px;height:183px;background:#e8e8e8;"></div>
<div style="position:absolute;left:571px;top:161px;width:1px;height:183px;background:#e8e8e8;"></div>
<div style="position:absolute;left:617px;top:161px;width:1px;height:183px;background:#e8e8e8;"></div>
<div style="position:absolute;left:689.5px;top:161px;width:1px;height:183px;background:#e8e8e8;"></div>
<div style="position:absolute;left:761.5px;top:161px;width:1px;height:183px;background:#e8e8e8;"></div>
<div style="position:absolute;left:421.5px;top:189.5px;font-size:12px;line-height:1;color:#111;white-space:pre;">1</div>
<div style="position:absolute;right:818px;top:189.5px;font-size:12px;line-height:1;color:#111;white-space:pre;text-align:right;">U</div>
<div style="position:absolute;right:763px;top:189.5px;font-size:12px;line-height:1;color:#111;white-space:pre;text-align:right;">1</div>
<div style="position:absolute;right:716.5px;top:189.5px;font-size:12px;line-height:1;color:#444;white-space:pre;text-align:right;">---------</div>
<div style="position:absolute;right:648.5px;top:189.5px;font-size:12px;line-height:1;color:#111;white-space:pre;text-align:right;">100.388</div>
<div style="position:absolute;right:577.5px;top:189.5px;font-size:12px;line-height:1;color:#111;white-space:pre;text-align:right;">100.392</div>
<div style="position:absolute;right:505.5px;top:189.5px;font-size:12px;line-height:1;color:#111;white-space:pre;text-align:right;">100.247</div>
<div style="position:absolute;left:415px;top:203.4px;width:420px;height:1px;background:#ebebeb;"></div>
<div style="position:absolute;left:421.5px;top:206.9px;font-size:12px;line-height:1;color:#111;white-space:pre;">2</div>
<div style="position:absolute;right:818px;top:206.9px;font-size:12px;line-height:1;color:#111;white-space:pre;text-align:right;">U</div>
<div style="position:absolute;right:763px;top:206.9px;font-size:12px;line-height:1;color:#111;white-space:pre;text-align:right;">2</div>
<div style="position:absolute;right:716.5px;top:206.9px;font-size:12px;line-height:1;color:#444;white-space:pre;text-align:right;">---------</div>
<div style="position:absolute;right:644.5px;top:206.9px;font-size:12px;line-height:1;color:#111;white-space:pre;text-align:right;">0.10034k</div>
<div style="position:absolute;right:573.5px;top:206.9px;font-size:12px;line-height:1;color:#111;white-space:pre;text-align:right;">0.10035k</div>
<div style="position:absolute;right:501.5px;top:206.9px;font-size:12px;line-height:1;color:#111;white-space:pre;text-align:right;">0.10020k</div>
<div style="position:absolute;left:415px;top:220.8px;width:420px;height:1px;background:#ebebeb;"></div>
<div style="position:absolute;left:421.5px;top:224.3px;font-size:12px;line-height:1;color:#111;white-space:pre;">3</div>
<div style="position:absolute;right:818px;top:224.3px;font-size:12px;line-height:1;color:#111;white-space:pre;text-align:right;">U</div>
<div style="position:absolute;right:763px;top:224.3px;font-size:12px;line-height:1;color:#111;white-space:pre;text-align:right;">3</div>
<div style="position:absolute;right:716.5px;top:224.3px;font-size:12px;line-height:1;color:#444;white-space:pre;text-align:right;">---------</div>
<div style="position:absolute;right:644.5px;top:224.3px;font-size:12px;line-height:1;color:#111;white-space:pre;text-align:right;">0.10039k</div>
<div style="position:absolute;right:573.5px;top:224.3px;font-size:12px;line-height:1;color:#111;white-space:pre;text-align:right;">0.10039k</div>
<div style="position:absolute;right:501.5px;top:224.3px;font-size:12px;line-height:1;color:#111;white-space:pre;text-align:right;">0.10025k</div>
<div style="position:absolute;left:415px;top:238.2px;width:420px;height:1px;background:#ebebeb;"></div>
<div style="position:absolute;left:421.5px;top:241.7px;font-size:12px;line-height:1;color:#111;white-space:pre;">4</div>
<div style="position:absolute;right:818px;top:241.7px;font-size:12px;line-height:1;color:#111;white-space:pre;text-align:right;">U</div>
<div style="position:absolute;right:763px;top:241.7px;font-size:12px;line-height:1;color:#111;white-space:pre;text-align:right;">4</div>
<div style="position:absolute;right:716.5px;top:241.7px;font-size:12px;line-height:1;color:#444;white-space:pre;text-align:right;">---------</div>
<div style="position:absolute;right:644.5px;top:241.7px;font-size:12px;line-height:1;color:#111;white-space:pre;text-align:right;">0.00000k</div>
<div style="position:absolute;right:573.5px;top:241.7px;font-size:12px;line-height:1;color:#111;white-space:pre;text-align:right;">0.00000k</div>
<div style="position:absolute;right:501.5px;top:241.7px;font-size:12px;line-height:1;color:#111;white-space:pre;text-align:right;">0.00000k</div>
<div style="position:absolute;left:415px;top:255.60000000000002px;width:420px;height:1px;background:#ebebeb;"></div>
<div style="position:absolute;left:421.5px;top:259.1px;font-size:12px;line-height:1;color:#111;white-space:pre;">5</div>
<div style="position:absolute;right:818px;top:259.1px;font-size:12px;line-height:1;color:#111;white-space:pre;text-align:right;">U</div>
<div style="position:absolute;right:763px;top:259.1px;font-size:12px;line-height:1;color:#111;white-space:pre;text-align:right;">SIGMA</div>
<div style="position:absolute;right:716.5px;top:259.1px;font-size:12px;line-height:1;color:#444;white-space:pre;text-align:right;">---------</div>
<div style="position:absolute;right:644.5px;top:259.1px;font-size:12px;line-height:1;color:#111;white-space:pre;text-align:right;">---------</div>
<div style="position:absolute;right:573.5px;top:259.1px;font-size:12px;line-height:1;color:#111;white-space:pre;text-align:right;">---------</div>
<div style="position:absolute;right:501.5px;top:259.1px;font-size:12px;line-height:1;color:#111;white-space:pre;text-align:right;">---------</div>
<div style="position:absolute;left:415px;top:273.0px;width:420px;height:1px;background:#ebebeb;"></div>
<div style="position:absolute;left:421.5px;top:276.5px;font-size:12px;line-height:1;color:#111;white-space:pre;">6</div>
<div style="position:absolute;right:818px;top:276.5px;font-size:12px;line-height:1;color:#111;white-space:pre;text-align:right;">U</div>
<div style="position:absolute;right:763px;top:276.5px;font-size:12px;line-height:1;color:#111;white-space:pre;text-align:right;">SIGMB</div>
<div style="position:absolute;right:716.5px;top:276.5px;font-size:12px;line-height:1;color:#444;white-space:pre;text-align:right;">---------</div>
<div style="position:absolute;right:644.5px;top:276.5px;font-size:12px;line-height:1;color:#111;white-space:pre;text-align:right;">---------</div>
<div style="position:absolute;right:573.5px;top:276.5px;font-size:12px;line-height:1;color:#111;white-space:pre;text-align:right;">---------</div>
<div style="position:absolute;right:501.5px;top:276.5px;font-size:12px;line-height:1;color:#111;white-space:pre;text-align:right;">---------</div>
<div style="position:absolute;left:415px;top:290.4px;width:420px;height:1px;background:#ebebeb;"></div>
<div style="position:absolute;left:421.5px;top:293.9px;font-size:12px;line-height:1;color:#111;white-space:pre;">7</div>
<div style="position:absolute;right:818px;top:293.9px;font-size:12px;line-height:1;color:#111;white-space:pre;text-align:right;">CfU</div>
<div style="position:absolute;right:763px;top:293.9px;font-size:12px;line-height:1;color:#111;white-space:pre;text-align:right;">1</div>
<div style="position:absolute;right:716.5px;top:293.9px;font-size:12px;line-height:1;color:#444;white-space:pre;text-align:right;">---------</div>
<div style="position:absolute;right:648.5px;top:293.9px;font-size:12px;line-height:1;color:#111;white-space:pre;text-align:right;">1.4087</div>
<div style="position:absolute;right:577.5px;top:293.9px;font-size:12px;line-height:1;color:#111;white-space:pre;text-align:right;">1.4090</div>
<div style="position:absolute;right:505.5px;top:293.9px;font-size:12px;line-height:1;color:#111;white-space:pre;text-align:right;">1.4080</div>
<div style="position:absolute;left:415px;top:307.79999999999995px;width:420px;height:1px;background:#ebebeb;"></div>
<div style="position:absolute;left:421.5px;top:311.29999999999995px;font-size:12px;line-height:1;color:#111;white-space:pre;">8</div>
<div style="position:absolute;right:818px;top:311.29999999999995px;font-size:12px;line-height:1;color:#111;white-space:pre;text-align:right;">CfU</div>
<div style="position:absolute;right:763px;top:311.29999999999995px;font-size:12px;line-height:1;color:#111;white-space:pre;text-align:right;">2</div>
<div style="position:absolute;right:716.5px;top:311.29999999999995px;font-size:12px;line-height:1;color:#444;white-space:pre;text-align:right;">---------</div>
<div style="position:absolute;right:648.5px;top:311.29999999999995px;font-size:12px;line-height:1;color:#111;white-space:pre;text-align:right;">1.4130</div>
<div style="position:absolute;right:577.5px;top:311.29999999999995px;font-size:12px;line-height:1;color:#111;white-space:pre;text-align:right;">1.4161</div>
<div style="position:absolute;right:505.5px;top:311.29999999999995px;font-size:12px;line-height:1;color:#111;white-space:pre;text-align:right;">1.4127</div>
<div style="position:absolute;left:415px;top:325.2px;width:420px;height:1px;background:#ebebeb;"></div>
<div style="position:absolute;left:421.5px;top:328.7px;font-size:12px;line-height:1;color:#111;white-space:pre;">9</div>
<div style="position:absolute;right:818px;top:328.7px;font-size:12px;line-height:1;color:#111;white-space:pre;text-align:right;">CfU</div>
<div style="position:absolute;right:763px;top:328.7px;font-size:12px;line-height:1;color:#111;white-space:pre;text-align:right;">3</div>
<div style="position:absolute;right:716.5px;top:328.7px;font-size:12px;line-height:1;color:#444;white-space:pre;text-align:right;">---------</div>
<div style="position:absolute;right:648.5px;top:328.7px;font-size:12px;line-height:1;color:#111;white-space:pre;text-align:right;">1.4122</div>
<div style="position:absolute;right:577.5px;top:328.7px;font-size:12px;line-height:1;color:#111;white-space:pre;text-align:right;">1.4130</div>
<div style="position:absolute;right:505.5px;top:328.7px;font-size:12px;line-height:1;color:#111;white-space:pre;text-align:right;">1.4110</div>
<div style="position:absolute;left:834.5px;top:161px;width:15px;height:183px;background:linear-gradient(90deg,#f0f0f0,#fafafa);"></div>
<svg style="position:absolute;left:834.5px;top:161px" width="15" height="183"><path d="M4.5,9 L7.5,5.5 L10.5,9 Z" fill="#404040"/><path d="M4.5,174 L7.5,177.5 L10.5,174 Z" fill="#404040"/></svg>
<div style="position:absolute;left:836.0px;top:179px;width:12px;height:97px;background:linear-gradient(90deg,#e8e8e8,#f4f4f4 40%,#dcdcdc);border:1px solid #9a9a9a;border-radius:2px;"></div>
<div style="position:absolute;left:839.5px;top:224.0px;width:6px;height:1px;background:#606060;"></div>
<div style="position:absolute;left:839.5px;top:226.5px;width:6px;height:1px;background:#606060;"></div>
<div style="position:absolute;left:839.5px;top:229.0px;width:6px;height:1px;background:#606060;"></div>
<div style="position:absolute;left:415px;top:397px;width:437px;height:101px;background:#fff;border:1px solid #8a8e92;border-top:1.5px solid #6a6e72;"></div>
<div style="position:absolute;left:416px;top:398px;width:419px;height:22px;background:linear-gradient(#ffffff,#f2f4f6);"></div>
<div style="position:absolute;left:416px;top:420px;width:419px;height:1px;background:#e6e6e6;"></div>
<div style="position:absolute;left:483.5px;top:398px;width:1px;height:99px;background:#e8e8e8;"></div>
<div style="position:absolute;left:518.5px;top:398px;width:1px;height:99px;background:#e8e8e8;"></div>
<div style="position:absolute;left:590.5px;top:398px;width:1px;height:99px;background:#e8e8e8;"></div>
<div style="position:absolute;left:662px;top:398px;width:1px;height:99px;background:#e8e8e8;"></div>
<div style="position:absolute;left:733.5px;top:398px;width:1px;height:99px;background:#e8e8e8;"></div>
<div style="position:absolute;left:805px;top:398px;width:1px;height:99px;background:#e8e8e8;"></div>
<div style="position:absolute;left:422px;top:426.0px;font-size:12px;line-height:1;color:#111;white-space:pre;">U</div>
<div style="position:absolute;right:815px;top:426.0px;font-size:12px;line-height:1;color:#111;white-space:pre;text-align:right;">V</div>
<div style="position:absolute;right:749px;top:426.0px;font-size:12px;line-height:1;color:#111;white-space:pre;text-align:right;">100.388</div>
<div style="position:absolute;right:672px;top:426.0px;font-size:12px;line-height:1;color:#111;white-space:pre;text-align:right;">0.10034k</div>
<div style="position:absolute;right:600px;top:426.0px;font-size:12px;line-height:1;color:#111;white-space:pre;text-align:right;">0.10039k</div>
<div style="position:absolute;right:528px;top:426.0px;font-size:12px;line-height:1;color:#111;white-space:pre;text-align:right;">0.00000k</div>
<div style="position:absolute;left:416px;top:439.9px;width:419px;height:1px;background:#ebebeb;"></div>
<div style="position:absolute;left:422px;top:443.4px;font-size:12px;line-height:1;color:#111;white-space:pre;">I</div>
<div style="position:absolute;right:815px;top:443.4px;font-size:12px;line-height:1;color:#111;white-space:pre;text-align:right;">A</div>
<div style="position:absolute;right:749px;top:443.4px;font-size:12px;line-height:1;color:#111;white-space:pre;text-align:right;">0.64418</div>
<div style="position:absolute;right:677px;top:443.4px;font-size:12px;line-height:1;color:#111;white-space:pre;text-align:right;">0.64422</div>
<div style="position:absolute;right:605px;top:443.4px;font-size:12px;line-height:1;color:#111;white-space:pre;text-align:right;">0.64418</div>
<div style="position:absolute;right:532px;top:443.4px;font-size:12px;line-height:1;color:#111;white-space:pre;text-align:right;">0.00000</div>
<div style="position:absolute;left:416px;top:457.3px;width:419px;height:1px;background:#ebebeb;"></div>
<div style="position:absolute;left:422px;top:460.8px;font-size:12px;line-height:1;color:#111;white-space:pre;">P</div>
<div style="position:absolute;right:815px;top:460.8px;font-size:12px;line-height:1;color:#111;white-space:pre;text-align:right;">W</div>
<div style="position:absolute;right:749px;top:460.8px;font-size:12px;line-height:1;color:#111;white-space:pre;text-align:right;">-62.093</div>
<div style="position:absolute;right:672px;top:460.8px;font-size:12px;line-height:1;color:#111;white-space:pre;text-align:right;">-0.06207k</div>
<div style="position:absolute;right:600px;top:460.8px;font-size:12px;line-height:1;color:#111;white-space:pre;text-align:right;">-0.06210k</div>
<div style="position:absolute;right:528px;top:460.8px;font-size:12px;line-height:1;color:#111;white-space:pre;text-align:right;">0.00000k</div>
<div style="position:absolute;left:416px;top:474.7px;width:419px;height:1px;background:#ebebeb;"></div>
<div style="position:absolute;left:422px;top:478.2px;font-size:12px;line-height:1;color:#111;white-space:pre;">S</div>
<div style="position:absolute;right:815px;top:478.2px;font-size:12px;line-height:1;color:#111;white-space:pre;text-align:right;">VA</div>
<div style="position:absolute;right:749px;top:478.2px;font-size:12px;line-height:1;color:#111;white-space:pre;text-align:right;">64.668</div>
<div style="position:absolute;right:672px;top:478.2px;font-size:12px;line-height:1;color:#111;white-space:pre;text-align:right;">0.06464k</div>
<div style="position:absolute;right:600px;top:478.2px;font-size:12px;line-height:1;color:#111;white-space:pre;text-align:right;">0.06467k</div>
<div style="position:absolute;right:528px;top:478.2px;font-size:12px;line-height:1;color:#111;white-space:pre;text-align:right;">0.00000k</div>
<div style="position:absolute;left:835px;top:398px;width:15px;height:99px;background:linear-gradient(90deg,#f0f0f0,#fafafa);"></div>
<svg style="position:absolute;left:835px;top:398px" width="15" height="99"><path d="M4.5,9 L7.5,5.5 L10.5,9 Z" fill="#404040"/><path d="M4.5,90 L7.5,93.5 L10.5,90 Z" fill="#404040"/></svg>
<div style="position:absolute;left:836.5px;top:408px;width:12px;height:34px;background:linear-gradient(90deg,#e8e8e8,#f4f4f4 40%,#dcdcdc);border:1px solid #9a9a9a;border-radius:2px;"></div>
<div style="position:absolute;left:840px;top:422.0px;width:6px;height:1px;background:#606060;"></div>
<div style="position:absolute;left:840px;top:424.5px;width:6px;height:1px;background:#606060;"></div>
<div style="position:absolute;left:840px;top:427.0px;width:6px;height:1px;background:#606060;"></div>
<svg style="position:absolute;left:0;top:0" width="1329" height="698"><text x="101.6" y="139" font-family="Liberation Sans" font-size="12.8" fill="#151515" textLength="62.6" lengthAdjust="spacingAndGlyphs">FreqPLL[Hz]</text><text x="182.3" y="139" font-family="Liberation Sans" font-size="12.8" fill="#151515" textLength="54.2" lengthAdjust="spacingAndGlyphs">Uthd1[%]</text><text x="258.8" y="139" font-family="Liberation Sans" font-size="12.8" fill="#151515" textLength="48.2" lengthAdjust="spacingAndGlyphs">Ithd1[%]</text><text x="97.8" y="194.2" font-family="Liberation Sans" font-size="12.8" fill="#151515" textLength="29.2" lengthAdjust="spacingAndGlyphs">Order</text><text x="164.3" y="194.2" font-family="Liberation Sans" font-size="12.8" fill="#151515" textLength="30.7" lengthAdjust="spacingAndGlyphs">U1[V]</text><text x="239.4" y="194.2" font-family="Liberation Sans" font-size="12.8" fill="#151515" textLength="28.0" lengthAdjust="spacingAndGlyphs">I1[A]</text><text x="427" y="179.5" font-family="Liberation Sans" font-size="12.8" fill="#151515" textLength="17.0" lengthAdjust="spacingAndGlyphs">No.</text><text x="467.3" y="179.5" font-family="Liberation Sans" font-size="12.8" fill="#151515" textLength="43.7" lengthAdjust="spacingAndGlyphs">Function</text><text x="522.1" y="179.5" font-family="Liberation Sans" font-size="12.8" fill="#151515" textLength="43.9" lengthAdjust="spacingAndGlyphs">Element</text><text x="582.2" y="179.5" font-family="Liberation Sans" font-size="12.8" fill="#151515" textLength="29.8" lengthAdjust="spacingAndGlyphs">Order</text><text x="660.4" y="179.5" font-family="Liberation Sans" font-size="12.8" fill="#151515" textLength="22.6" lengthAdjust="spacingAndGlyphs">Data</text><text x="736.6" y="179.5" font-family="Liberation Sans" font-size="12.8" fill="#151515" textLength="19.2" lengthAdjust="spacingAndGlyphs">Max</text><text x="811.5" y="179.5" font-family="Liberation Sans" font-size="12.8" fill="#151515" textLength="15.5" lengthAdjust="spacingAndGlyphs">Min</text><text x="433.2" y="416.5" font-family="Liberation Sans" font-size="12.8" fill="#151515" textLength="43.8" lengthAdjust="spacingAndGlyphs">Function</text><text x="488.1" y="416.5" font-family="Liberation Sans" font-size="12.8" fill="#151515" textLength="26.1" lengthAdjust="spacingAndGlyphs">Units</text><text x="535.6" y="416.5" font-family="Liberation Sans" font-size="12.8" fill="#151515" textLength="47.9" lengthAdjust="spacingAndGlyphs">Element1</text><text x="608.5" y="416.5" font-family="Liberation Sans" font-size="12.8" fill="#151515" textLength="48.0" lengthAdjust="spacingAndGlyphs">Element2</text><text x="679.8" y="416.5" font-family="Liberation Sans" font-size="12.8" fill="#151515" textLength="48.0" lengthAdjust="spacingAndGlyphs">Element3</text><text x="751.5" y="416.5" font-family="Liberation Sans" font-size="12.8" fill="#151515" textLength="48.0" lengthAdjust="spacingAndGlyphs">Element4</text></svg>
<div style="position:absolute;left:404px;top:537px;width:447px;height:153px;background:#f0efee;"></div>
<div style="position:absolute;left:404px;top:548px;width:447px;height:67px;background:#050303;"></div>
<div style="position:absolute;left:404px;top:618px;width:447px;height:68px;background:#050303;"></div>
<div style="position:absolute;left:404px;top:615px;width:447px;height:3px;background:#fbfbfb;"></div>
<svg style="position:absolute;left:0;top:0" width="1329" height="698"><rect x="465.5" y="557.5" width="380" height="37" fill="none" stroke="#e8e8e8" stroke-width="1"/><line x1="466" y1="567.5" x2="845" y2="567.5" stroke="#e8e8e8" stroke-width="1" stroke-dasharray="3 3"/><line x1="466" y1="577.5" x2="845" y2="577.5" stroke="#e8e8e8" stroke-width="1" stroke-dasharray="3 3"/><line x1="466" y1="587.5" x2="845" y2="587.5" stroke="#e8e8e8" stroke-width="1" stroke-dasharray="3 3"/><line x1="485.5" y1="558" x2="485.5" y2="594" stroke="#e8e8e8" stroke-width="1" stroke-dasharray="3 3"/><line x1="546.5" y1="558" x2="546.5" y2="594" stroke="#e8e8e8" stroke-width="1" stroke-dasharray="3 3"/><line x1="614.5" y1="558" x2="614.5" y2="594" stroke="#e8e8e8" stroke-width="1" stroke-dasharray="3 3"/><line x1="682.5" y1="558" x2="682.5" y2="594" stroke="#e8e8e8" stroke-width="1" stroke-dasharray="3 3"/><line x1="750.5" y1="558" x2="750.5" y2="594" stroke="#e8e8e8" stroke-width="1" stroke-dasharray="3 3"/><rect x="466.0" y="567.0" width="4" height="27.5" fill="#e8e020"/><rect x="479.2" y="567.0" width="4" height="27.5" fill="#e8e020"/><rect x="492.9" y="583.0" width="4" height="11.5" fill="#e8e020"/><rect x="506.6" y="584.0" width="4" height="10.5" fill="#e8e020"/><rect x="520.3" y="583.0" width="4" height="11.5" fill="#e8e020"/><rect x="534.0" y="587.0" width="4" height="7.5" fill="#e8e020"/><rect x="547.7" y="587.0" width="4" height="7.5" fill="#e8e020"/><rect x="561.4" y="588.0" width="4" height="6.5" fill="#e8e020"/><rect x="575.1" y="592.0" width="4" height="2.5" fill="#e8e020"/><rect x="588.8" y="593.0" width="4" height="1.5" fill="#e8e020"/><rect x="616.2" y="592.5" width="4" height="2.0" fill="#e8e020"/><rect x="643.6" y="591.5" width="4" height="3.0" fill="#e8e020"/><text x="484.5" y="604" font-family="Liberation Sans" font-size="9" fill="#ececec" text-anchor="middle">1</text><text x="546.5" y="604" font-family="Liberation Sans" font-size="9" fill="#ececec" text-anchor="middle">10</text><text x="614.5" y="604" font-family="Liberation Sans" font-size="9" fill="#ececec" text-anchor="middle">20</text><text x="682.5" y="604" font-family="Liberation Sans" font-size="9" fill="#ececec" text-anchor="middle">30</text><text x="750.5" y="604" font-family="Liberation Sans" font-size="9" fill="#ececec" text-anchor="middle">40</text><text x="408" y="561.8" font-family="Liberation Sans" font-size="8.6" fill="#ececec" textLength="39.5" lengthAdjust="spacingAndGlyphs">1.0000kV</text><text x="408" y="569.5" font-family="Liberation Sans" font-size="8.6" fill="#ececec" textLength="39.5" lengthAdjust="spacingAndGlyphs">100.00 V</text><text x="408" y="580.5" font-family="Liberation Sans" font-size="8.6" fill="#ececec" textLength="39.5" lengthAdjust="spacingAndGlyphs">10.000 V</text><text x="408" y="589.5" font-family="Liberation Sans" font-size="8.6" fill="#ececec" textLength="39.5" lengthAdjust="spacingAndGlyphs">1.0000 V</text><text x="408" y="598.1999999999999" font-family="Liberation Sans" font-size="8.6" fill="#ececec" textLength="39.5" lengthAdjust="spacingAndGlyphs">100.00mV</text><rect x="465.5" y="627.5" width="380" height="36" fill="none" stroke="#e8e8e8" stroke-width="1"/><line x1="466" y1="637.5" x2="845" y2="637.5" stroke="#e8e8e8" stroke-width="1" stroke-dasharray="3 3"/><line x1="466" y1="646.5" x2="845" y2="646.5" stroke="#e8e8e8" stroke-width="1" stroke-dasharray="3 3"/><line x1="466" y1="656.5" x2="845" y2="656.5" stroke="#e8e8e8" stroke-width="1" stroke-dasharray="3 3"/><line x1="485.5" y1="628" x2="485.5" y2="663" stroke="#e8e8e8" stroke-width="1" stroke-dasharray="3 3"/><line x1="546.5" y1="628" x2="546.5" y2="663" stroke="#e8e8e8" stroke-width="1" stroke-dasharray="3 3"/><line x1="614.5" y1="628" x2="614.5" y2="663" stroke="#e8e8e8" stroke-width="1" stroke-dasharray="3 3"/><line x1="682.5" y1="628" x2="682.5" y2="663" stroke="#e8e8e8" stroke-width="1" stroke-dasharray="3 3"/><line x1="750.5" y1="628" x2="750.5" y2="663" stroke="#e8e8e8" stroke-width="1" stroke-dasharray="3 3"/><rect x="466.0" y="636.5" width="4" height="27.0" fill="#18a040"/><rect x="479.2" y="637.5" width="4" height="26.0" fill="#18a040"/><rect x="492.9" y="642.9" width="4" height="20.6" fill="#18a040"/><rect x="506.6" y="648.3" width="4" height="15.2" fill="#18a040"/><rect x="520.3" y="650.9" width="4" height="12.6" fill="#18a040"/><rect x="534.0" y="651.9" width="4" height="11.6" fill="#18a040"/><rect x="547.7" y="653.5" width="4" height="10.0" fill="#18a040"/><rect x="561.4" y="654.5" width="4" height="9.0" fill="#18a040"/><rect x="575.1" y="657.0" width="4" height="6.5" fill="#18a040"/><rect x="588.8" y="659.9" width="4" height="3.6" fill="#18a040"/><rect x="602.5" y="656.3" width="4" height="7.2" fill="#18a040"/><rect x="616.2" y="658.8" width="4" height="4.7" fill="#18a040"/><rect x="643.6" y="659.2" width="4" height="4.3" fill="#18a040"/><rect x="657.3" y="660.2" width="4" height="3.3" fill="#18a040"/><rect x="671.0" y="658.4" width="4" height="5.1" fill="#18a040"/><rect x="684.7" y="661.3" width="4" height="2.2" fill="#18a040"/><rect x="712.1" y="659.2" width="4" height="4.3" fill="#18a040"/><rect x="739.5" y="660.6" width="4" height="2.9" fill="#18a040"/><rect x="766.9" y="660.6" width="4" height="2.9" fill="#18a040"/><rect x="794.3" y="660.9" width="4" height="2.6" fill="#18a040"/><rect x="808.0" y="660.6" width="4" height="2.9" fill="#18a040"/><text x="484.5" y="673" font-family="Liberation Sans" font-size="9" fill="#ececec" text-anchor="middle">1</text><text x="546.5" y="673" font-family="Liberation Sans" font-size="9" fill="#ececec" text-anchor="middle">10</text><text x="614.5" y="673" font-family="Liberation Sans" font-size="9" fill="#ececec" text-anchor="middle">20</text><text x="682.5" y="673" font-family="Liberation Sans" font-size="9" fill="#ececec" text-anchor="middle">30</text><text x="750.5" y="673" font-family="Liberation Sans" font-size="9" fill="#ececec" text-anchor="middle">40</text><text x="408" y="631.5" font-family="Liberation Sans" font-size="8.6" fill="#ececec" textLength="39.5" lengthAdjust="spacingAndGlyphs">10.000 A</text><text x="408" y="639.0999999999999" font-family="Liberation Sans" font-size="8.6" fill="#ececec" textLength="39.5" lengthAdjust="spacingAndGlyphs">1.0000 A</text><text x="408" y="650.1999999999999" font-family="Liberation Sans" font-size="8.6" fill="#ececec" textLength="39.5" lengthAdjust="spacingAndGlyphs">100.00mA</text><text x="408" y="658.5" font-family="Liberation Sans" font-size="8.6" fill="#ececec" textLength="39.5" lengthAdjust="spacingAndGlyphs">10.000mA</text><text x="408" y="668.5" font-family="Liberation Sans" font-size="8.6" fill="#ececec" textLength="39.5" lengthAdjust="spacingAndGlyphs">1.0000mA</text></svg>
<div style="position:absolute;left:870px;top:120px;width:449px;height:226px;background:#f0efee;"></div>
<div style="position:absolute;left:870px;top:131px;width:448px;height:198px;background:#050303;"></div>
<svg style="position:absolute;left:0;top:0" width="1329" height="698"><rect x="881.5" y="140.5" width="424" height="177" fill="none" stroke="#f0f0f0" stroke-width="1.2"/><circle cx="1093.3" cy="229" r="78" fill="none" stroke="#a8a8a8" stroke-width="1"/><circle cx="1093.3" cy="229" r="39" fill="none" stroke="#a8a8a8" stroke-width="1"/><line x1="1093.3" y1="161" x2="1093.3" y2="201" stroke="#c8c8c8" stroke-width="1" stroke-dasharray="3 3"/><line x1="1054.1" y1="255.4" x2="962.5" y2="317" stroke="#c8c8c8" stroke-width="1" stroke-dasharray="3 3"/><line x1="1132.7" y1="255.4" x2="1224.5" y2="317" stroke="#c8c8c8" stroke-width="1" stroke-dasharray="3 3"/><line x1="1093.3" y1="229" x2="1093.3" y2="201.4" stroke="#20c040" stroke-width="1.3"/><line x1="1080.5" y1="238.3" x2="1107.8" y2="238.3" stroke="#d040d0" stroke-width="2"/><line x1="1080.5" y1="238.3" x2="1093.3" y2="214.7" stroke="#e8e070" stroke-width="1"/><line x1="1095" y1="215" x2="1107.8" y2="238.3" stroke="#3050d0" stroke-width="1.2" stroke-dasharray="2 1.5"/><line x1="1093.3" y1="229" x2="1115.8" y2="244" stroke="#30c8e0" stroke-width="1.1"/><line x1="1092.5" y1="230.3" x2="1073.3" y2="244" stroke="#e08030" stroke-width="1" stroke-dasharray="3 1"/><line x1="1093.3" y1="229" x2="1074" y2="236.7" stroke="#2040a0" stroke-width="1" stroke-dasharray="2 2"/><rect x="1077" y="141.5" width="36" height="19" fill="#050303"/><text x="1078.9" y="148.4" font-family="Liberation Sans" font-size="9" fill="#e8e060" textLength="33" lengthAdjust="spacingAndGlyphs">3.000kV</text><text x="1078.9" y="158.9" font-family="Liberation Sans" font-size="9" fill="#30c050" textLength="31.3" lengthAdjust="spacingAndGlyphs">6.000 A</text><text x="885.3" y="153.9" font-family="Liberation Sans" font-size="9" fill="#ececec" textLength="46" lengthAdjust="spacingAndGlyphs">Wiring  Σ  A</text><text x="946.9" y="153.9" font-family="Liberation Sans" font-size="9" fill="#ececec" textLength="32" lengthAdjust="spacingAndGlyphs">= 3P3W</text><text x="885.3" y="163.7" font-family="Liberation Sans" font-size="9" fill="#ececec" textLength="33" lengthAdjust="spacingAndGlyphs">PLL Src</text><text x="946.5" y="163.7" font-family="Liberation Sans" font-size="9" fill="#ececec" textLength="5" lengthAdjust="spacingAndGlyphs">I1</text><text x="885.3" y="173.5" font-family="Liberation Sans" font-size="9" fill="#ececec" textLength="19" lengthAdjust="spacingAndGlyphs">fPLL</text><text x="946.9" y="173.5" font-family="Liberation Sans" font-size="9" fill="#ececec" textLength="6" lengthAdjust="spacingAndGlyphs">=</text><text x="974.8" y="173.5" font-family="Liberation Sans" font-size="9" fill="#ececec" textLength="39" lengthAdjust="spacingAndGlyphs">49.996  Hz</text><text x="886" y="182.9" font-family="Liberation Sans" font-size="9" fill="#ececec" textLength="34" lengthAdjust="spacingAndGlyphs">φ U1-U2</text><text x="946.9" y="182.9" font-family="Liberation Sans" font-size="9" fill="#ececec" textLength="6" lengthAdjust="spacingAndGlyphs">=</text><text x="979.6" y="182.9" font-family="Liberation Sans" font-size="9" fill="#ececec" textLength="19" lengthAdjust="spacingAndGlyphs">0.001</text><text x="1004" y="180.9" font-family="Liberation Sans" font-size="9" fill="#ececec" textLength="4" lengthAdjust="spacingAndGlyphs">°</text><text x="886" y="192.7" font-family="Liberation Sans" font-size="9" fill="#ececec" textLength="31" lengthAdjust="spacingAndGlyphs">φ U1-I1</text><text x="946.9" y="192.7" font-family="Liberation Sans" font-size="9" fill="#ececec" textLength="6" lengthAdjust="spacingAndGlyphs">=</text><text x="969.6" y="192.7" font-family="Liberation Sans" font-size="9" fill="#ececec" textLength="30.5" lengthAdjust="spacingAndGlyphs">175.908</text><text x="1004" y="190.7" font-family="Liberation Sans" font-size="9" fill="#ececec" textLength="4" lengthAdjust="spacingAndGlyphs">°</text><text x="886" y="202.2" font-family="Liberation Sans" font-size="9" fill="#ececec" textLength="33" lengthAdjust="spacingAndGlyphs">φ U1-I2</text><text x="946.9" y="202.2" font-family="Liberation Sans" font-size="9" fill="#ececec" textLength="6" lengthAdjust="spacingAndGlyphs">=</text><text x="969.6" y="202.2" font-family="Liberation Sans" font-size="9" fill="#ececec" textLength="30.5" lengthAdjust="spacingAndGlyphs">175.901</text><text x="1004" y="200.2" font-family="Liberation Sans" font-size="9" fill="#ececec" textLength="4" lengthAdjust="spacingAndGlyphs">°</text><text x="1189.5" y="153.9" font-family="Liberation Sans" font-size="9" fill="#ececec" textLength="21" lengthAdjust="spacingAndGlyphs">U1(1)</text><text x="1239.4" y="153.9" font-family="Liberation Sans" font-size="9" fill="#ececec" textLength="43.7" lengthAdjust="spacingAndGlyphs">0.10159kV</text><text x="1189.5" y="163.2" font-family="Liberation Sans" font-size="9" fill="#ececec" textLength="17.5" lengthAdjust="spacingAndGlyphs">I1(1)</text><text x="1241.6" y="163.2" font-family="Liberation Sans" font-size="9" fill="#ececec" textLength="41" lengthAdjust="spacingAndGlyphs">0.63765  A</text><text x="1189.5" y="172.9" font-family="Liberation Sans" font-size="9" fill="#ececec" textLength="21" lengthAdjust="spacingAndGlyphs">P1(1)</text><text x="1234.7" y="172.9" font-family="Liberation Sans" font-size="9" fill="#ececec" textLength="49" lengthAdjust="spacingAndGlyphs">−0.06123kW</text><text x="1189.5" y="182.2" font-family="Liberation Sans" font-size="9" fill="#ececec" textLength="21" lengthAdjust="spacingAndGlyphs">S1(1)</text><text x="1239.4" y="182.2" font-family="Liberation Sans" font-size="9" fill="#ececec" textLength="49.3" lengthAdjust="spacingAndGlyphs">0.06478kVA</text><text x="1189.5" y="192.1" font-family="Liberation Sans" font-size="9" fill="#ececec" textLength="22" lengthAdjust="spacingAndGlyphs">Q1(1)</text><text x="1239.4" y="192.1" font-family="Liberation Sans" font-size="9" fill="#ececec" textLength="49.3" lengthAdjust="spacingAndGlyphs">0.01801 kvar</text><text x="1188" y="202" font-family="Liberation Sans" font-size="9" fill="#ececec" textLength="23" lengthAdjust="spacingAndGlyphs">λ1(1)</text><text x="1236.6" y="202" font-family="Liberation Sans" font-size="9" fill="#ececec" textLength="36.3" lengthAdjust="spacingAndGlyphs">−0.96060</text><text x="1189.7" y="253.8" font-family="Liberation Sans" font-size="9" fill="#ececec" textLength="21.3" lengthAdjust="spacingAndGlyphs">U2(1)</text><text x="1239.6" y="253.8" font-family="Liberation Sans" font-size="9" fill="#ececec" textLength="43.6" lengthAdjust="spacingAndGlyphs">0.10158kV</text><text x="1189.7" y="263.5" font-family="Liberation Sans" font-size="9" fill="#ececec" textLength="17.5" lengthAdjust="spacingAndGlyphs">I2(1)</text><text x="1241.6" y="263.5" font-family="Liberation Sans" font-size="9" fill="#ececec" textLength="41" lengthAdjust="spacingAndGlyphs">0.63769  A</text><text x="1189.7" y="273.6" font-family="Liberation Sans" font-size="9" fill="#ececec" textLength="21" lengthAdjust="spacingAndGlyphs">P2(1)</text><text x="1235" y="273.6" font-family="Liberation Sans" font-size="9" fill="#ececec" textLength="48.5" lengthAdjust="spacingAndGlyphs">−0.06122kW</text><text x="1189.7" y="283" font-family="Liberation Sans" font-size="9" fill="#ececec" textLength="21" lengthAdjust="spacingAndGlyphs">S2(1)</text><text x="1239.6" y="283" font-family="Liberation Sans" font-size="9" fill="#ececec" textLength="49.4" lengthAdjust="spacingAndGlyphs">0.06477kVA</text><text x="1189.7" y="292.8" font-family="Liberation Sans" font-size="9" fill="#ececec" textLength="22" lengthAdjust="spacingAndGlyphs">Q2(1)</text><text x="1239.6" y="292.8" font-family="Liberation Sans" font-size="9" fill="#ececec" textLength="48.8" lengthAdjust="spacingAndGlyphs">0.01800kvar</text><text x="1188" y="302.5" font-family="Liberation Sans" font-size="9" fill="#ececec" textLength="23" lengthAdjust="spacingAndGlyphs">λ2(1)</text><text x="1237" y="302.5" font-family="Liberation Sans" font-size="9" fill="#ececec" textLength="35.3" lengthAdjust="spacingAndGlyphs">−0.96062</text></svg>
<div style="position:absolute;left:870px;top:386px;width:448px;height:114px;background:#f0efee;"></div>
<div style="position:absolute;left:870px;top:399px;width:448px;height:97px;background:#050303;"></div>
<svg style="position:absolute;left:0;top:0" width="1329" height="698"><line x1="915.5" y1="399" x2="915.5" y2="496" stroke="#a0a0a0" stroke-width="1" stroke-dasharray="4 3"/><line x1="960.5" y1="399" x2="960.5" y2="496" stroke="#a0a0a0" stroke-width="1" stroke-dasharray="4 3"/><line x1="1005.5" y1="399" x2="1005.5" y2="496" stroke="#a0a0a0" stroke-width="1" stroke-dasharray="4 3"/><line x1="1050.5" y1="399" x2="1050.5" y2="496" stroke="#a0a0a0" stroke-width="1" stroke-dasharray="4 3"/><line x1="1095.5" y1="399" x2="1095.5" y2="496" stroke="#a0a0a0" stroke-width="1" stroke-dasharray="4 3"/><line x1="1140.5" y1="399" x2="1140.5" y2="496" stroke="#a0a0a0" stroke-width="1" stroke-dasharray="4 3"/><line x1="1184.5" y1="399" x2="1184.5" y2="496" stroke="#a0a0a0" stroke-width="1" stroke-dasharray="4 3"/><line x1="1229.5" y1="399" x2="1229.5" y2="496" stroke="#a0a0a0" stroke-width="1" stroke-dasharray="4 3"/><line x1="1274.5" y1="399" x2="1274.5" y2="496" stroke="#a0a0a0" stroke-width="1" stroke-dasharray="4 3"/><line x1="870" y1="411.5" x2="1318" y2="411.5" stroke="#a0a0a0" stroke-width="1" stroke-dasharray="4 3"/><line x1="870" y1="423.5" x2="1318" y2="423.5" stroke="#a0a0a0" stroke-width="1" stroke-dasharray="4 3"/><line x1="870" y1="435.5" x2="1318" y2="435.5" stroke="#a0a0a0" stroke-width="1" stroke-dasharray="4 3"/><line x1="870" y1="447.5" x2="1318" y2="447.5" stroke="#a0a0a0" stroke-width="1" stroke-dasharray="4 3"/><line x1="870" y1="459.5" x2="1318" y2="459.5" stroke="#a0a0a0" stroke-width="1" stroke-dasharray="4 3"/><line x1="870" y1="471.5" x2="1318" y2="471.5" stroke="#a0a0a0" stroke-width="1" stroke-dasharray="4 3"/><line x1="870" y1="483.5" x2="1318" y2="483.5" stroke="#a0a0a0" stroke-width="1" stroke-dasharray="4 3"/><polyline points="884.0,428.1 896.0,440.1 908.1,453.7 920.1,467.2 924.7,471.7 935.0,476.0 945.0,480.0 956.2,483.7 963.8,485.2 971.3,483.7 980.3,487.5 986.3,489.8 995.0,490.5 1005.5,491.3 1010.0,488.3 1025.0,486.0 1040.0,483.8 1052.2,480.0 1062.7,479.3 1077.8,480.8 1091.3,480.0 1100.3,481.5 1110.0,480.8 1122.6,477.0 1134.6,479.3 1148.1,484.5 1160.2,477.0 1175.2,469.5 1188.8,465.0 1205.3,465.7 1214.4,459.7 1225.0,456.6 1234.0,450.6 1241.5,441.6 1252.1,434.1 1259.6,428.1 1267.1,422.8 1276.1,428.8 1285.1,428.8 1294.1,431.8 1300.2,437.1 1316.7,446.1" fill="none" stroke="#20c040" stroke-width="1.1"/><polyline points="871.3,458.2 878.0,461.2 884.0,451.4 890.0,461.2 896.0,465.0 902.1,482.2 909.6,467.2 915.6,474.7 920.1,482.2 926.2,470.2 930.7,464.2 936.7,456.7 942.7,447.6 948.7,455.2 954.7,438.6 960.8,434.1 969.8,428.1 974.3,449.1 980.3,437.1 984.8,417.6 990.8,422.1 995.3,434.1 1001.0,416.0 1005.5,417.6 1010.0,413.8 1014.6,423.6 1022.0,450.7 1029.6,450.7 1032.6,425.1 1038.6,431.1 1046.2,426.6 1051.4,412.3 1055.2,416.1 1059.0,465.7 1066.5,458.2 1077.0,444.7 1082.3,474.7 1090.5,428.1 1095.0,422.8 1100.3,435.6 1104.5,425.0 1118.0,450.7 1123.3,429.6 1130.0,431.9 1136.0,438.6 1140.6,491.3 1145.0,468.7 1154.2,446.2 1162.4,440.1 1172.2,453.7 1178.2,446.2 1185.8,443.1 1190.3,432.6 1194.8,435.6 1203.8,448.4 1211.3,443.1 1217.4,443.1 1222.6,439.4 1230.3,447.6 1237.8,435.6 1243.8,443.1 1253.6,429.6 1261.1,450.6 1267.8,434.8 1271.6,435.6 1276.1,459.6 1283.6,452.9 1289.6,446.1 1294.1,423.6 1298.7,438.6 1303.2,422.1 1307.7,431.1 1316.7,405.5" fill="none" stroke="#e8e850" stroke-width="1.1"/><polyline points="871.3,431.1 876.5,452.2 880.3,465.7 884.0,452.2 888.6,465.7 893.0,467.2 898.3,455.2 902.1,431.8 906.6,455.2 911.1,476.2 914.1,462.7 918.6,459.7 922.4,479.2 926.2,464.2 929.9,452.2 933.7,465.7 938.2,452.2 942.7,446.1 947.2,452.2 951.7,464.2 956.2,452.2 962.3,434.1 968.3,444.6 974.3,461.2 980.3,444.6 983.3,405.5 986.3,444.6 990.8,462.7 995.3,443.1 999.5,440.1 1004.8,456.7 1010.0,440.1 1017.6,464.2 1024.3,444.7 1031.0,446.2 1036.4,449.2 1041.6,426.6 1046.9,458.2 1052.2,438.6 1059.0,482.3 1062.0,467.2 1066.5,473.2 1070.2,464.2 1074.7,470.2 1079.3,461.2 1083.8,455.2 1088.3,465.7 1092.8,459.7 1098.8,467.2 1104.5,467.2 1109.0,479.3 1114.3,449.2 1118.8,485.3 1123.3,473.2 1127.0,471.7 1131.6,452.2 1136.1,470.2 1139.9,473.2 1145.1,461.2 1149.7,473.2 1153.4,455.2 1157.9,465.7 1162.4,453.7 1166.2,465.7 1171.5,438.6 1176.7,465.7 1181.3,471.7 1186.5,455.2 1190.3,477.8 1194.8,459.7 1199.3,464.2 1203.8,470.2 1208.3,485.3 1212.9,471.7 1217.4,483.8 1222.6,446.2 1227.1,468.7 1230.3,471.7 1235.5,491.2 1243.0,480.7 1249.0,461.1 1255.1,476.2 1261.1,459.6 1265.6,467.1 1271.6,455.1 1276.1,440.1 1282.1,452.1 1289.6,462.6 1294.1,455.1 1298.7,464.1 1303.2,453.6 1309.2,464.1 1316.7,447.6" fill="none" stroke="#c844c8" stroke-width="1.4"/><text x="871.2" y="407.6" font-family="Liberation Sans" font-size="9" fill="#e8e850" stroke="#e8e850" stroke-width="0.3" textLength="8.2" lengthAdjust="spacingAndGlyphs">U1</text><text x="927" y="407.6" font-family="Liberation Sans" font-size="9" fill="#e8e850" stroke="#e8e850" stroke-width="0.3" textLength="28.4" lengthAdjust="spacingAndGlyphs">100.131</text><text x="973.2" y="407.6" font-family="Liberation Sans" font-size="9" fill="#e8e850" stroke="#e8e850" stroke-width="0.3" textLength="6.8" lengthAdjust="spacingAndGlyphs">V</text><text x="871.2" y="417.6" font-family="Liberation Sans" font-size="9" fill="#20c040" stroke="#20c040" stroke-width="0.3" textLength="26" lengthAdjust="spacingAndGlyphs">FreqU1</text><text x="927" y="417.6" font-family="Liberation Sans" font-size="9" fill="#20c040" stroke="#20c040" stroke-width="0.3" textLength="26" lengthAdjust="spacingAndGlyphs">50.035</text><text x="972.5" y="417.6" font-family="Liberation Sans" font-size="9" fill="#20c040" stroke="#20c040" stroke-width="0.3" textLength="10.5" lengthAdjust="spacingAndGlyphs">Hz</text><text x="871.2" y="426.5" font-family="Liberation Sans" font-size="9" fill="#c848c8" stroke="#c848c8" stroke-width="0.3" textLength="15" lengthAdjust="spacingAndGlyphs">Cf I1</text><text x="930" y="426.5" font-family="Liberation Sans" font-size="9" fill="#c848c8" stroke="#c848c8" stroke-width="0.3" textLength="25.5" lengthAdjust="spacingAndGlyphs">1.7402</text><text x="871.2" y="475" font-family="Liberation Sans" font-size="9" fill="#c848c8" stroke="#c848c8" stroke-width="0.3" textLength="15" lengthAdjust="spacingAndGlyphs">Cf I1</text><text x="927.4" y="475" font-family="Liberation Sans" font-size="9" fill="#c848c8" stroke="#c848c8" stroke-width="0.3" textLength="25.6" lengthAdjust="spacingAndGlyphs">1.7236</text><text x="871.2" y="485.4" font-family="Liberation Sans" font-size="9" fill="#20c040" stroke="#20c040" stroke-width="0.3" textLength="26" lengthAdjust="spacingAndGlyphs">FreqU1</text><text x="927" y="485.4" font-family="Liberation Sans" font-size="9" fill="#20c040" stroke="#20c040" stroke-width="0.3" textLength="26" lengthAdjust="spacingAndGlyphs">49.982</text><text x="972.5" y="485.4" font-family="Liberation Sans" font-size="9" fill="#20c040" stroke="#20c040" stroke-width="0.3" textLength="10.5" lengthAdjust="spacingAndGlyphs">Hz</text><rect x="1071" y="486" width="49" height="10" fill="#050303"/><text x="1072.7" y="494.8" font-family="Liberation Sans" font-size="9" fill="#f0f0f0" stroke="#f0f0f0" stroke-width="0.3" textLength="46" lengthAdjust="spacingAndGlyphs">5.0 sec/div</text><text x="871.2" y="494.3" font-family="Liberation Sans" font-size="9" fill="#e8e850" stroke="#e8e850" stroke-width="0.3" textLength="8.2" lengthAdjust="spacingAndGlyphs">U1</text><text x="927" y="494.3" font-family="Liberation Sans" font-size="9" fill="#e8e850" stroke="#e8e850" stroke-width="0.3" textLength="26" lengthAdjust="spacingAndGlyphs">99.643</text><text x="973.2" y="494.3" font-family="Liberation Sans" font-size="9" fill="#e8e850" stroke="#e8e850" stroke-width="0.3" textLength="6.8" lengthAdjust="spacingAndGlyphs">V</text></svg>
<div style="position:absolute;left:869px;top:537px;width:449px;height:153px;background:#f0efee;"></div>
<div style="position:absolute;left:869px;top:549px;width:449px;height:137.5px;background:#050303;"></div>
<svg style="position:absolute;left:0;top:0" width="1329" height="698"><line x1="914.5" y1="549" x2="914.5" y2="686.5" stroke="#b0b0b0" stroke-width="1" stroke-dasharray="4 3"/><line x1="959.5" y1="549" x2="959.5" y2="686.5" stroke="#b0b0b0" stroke-width="1" stroke-dasharray="4 3"/><line x1="1004.5" y1="549" x2="1004.5" y2="686.5" stroke="#b0b0b0" stroke-width="1" stroke-dasharray="4 3"/><line x1="1049.5" y1="549" x2="1049.5" y2="686.5" stroke="#b0b0b0" stroke-width="1" stroke-dasharray="4 3"/><line x1="1094.5" y1="549" x2="1094.5" y2="686.5" stroke="#b0b0b0" stroke-width="1" stroke-dasharray="4 3"/><line x1="1139.5" y1="549" x2="1139.5" y2="686.5" stroke="#b0b0b0" stroke-width="1" stroke-dasharray="4 3"/><line x1="1184.5" y1="549" x2="1184.5" y2="686.5" stroke="#b0b0b0" stroke-width="1" stroke-dasharray="4 3"/><line x1="1229.5" y1="549" x2="1229.5" y2="686.5" stroke="#b0b0b0" stroke-width="1" stroke-dasharray="4 3"/><line x1="1274.5" y1="549" x2="1274.5" y2="686.5" stroke="#b0b0b0" stroke-width="1" stroke-dasharray="4 3"/><line x1="869" y1="572.5" x2="1318" y2="572.5" stroke="#b0b0b0" stroke-width="1" stroke-dasharray="4 3"/><line x1="869" y1="595.5" x2="1318" y2="595.5" stroke="#b0b0b0" stroke-width="1" stroke-dasharray="4 3"/><line x1="869" y1="618.5" x2="1318" y2="618.5" stroke="#b0b0b0" stroke-width="1" stroke-dasharray="4 3"/><line x1="869" y1="641.5" x2="1318" y2="641.5" stroke="#b0b0b0" stroke-width="1" stroke-dasharray="4 3"/><line x1="869" y1="664.5" x2="1318" y2="664.5" stroke="#b0b0b0" stroke-width="1" stroke-dasharray="4 3"/><polyline points="870,607.5 871,607.5 872,607.5 873,607.6 874,607.6 875,607.7 876,607.8 877,607.9 878,608.0 879,608.1 880,608.2 881,608.4 882,608.5 883,608.7 884,608.9 885,609.0 886,609.2 887,609.5 888,609.7 889,609.9 890,610.2 891,610.4 892,610.7 893,611.0 894,611.2 895,611.5 896,611.8 897,612.1 898,612.5 899,612.8 900,613.1 901,613.4 902,613.8 903,614.1 904,614.5 905,614.9 906,615.2 907,615.6 908,616.0 909,616.3 910,616.7 911,617.1 912,617.5 913,617.8 914,618.2 915,618.6 916,619.0 917,619.4 918,619.8 919,620.1 920,620.5 921,620.9 922,621.3 923,621.6 924,622.0 925,622.4 926,622.7 927,623.1 928,623.4 929,623.8 930,624.1 931,624.4 932,624.7 933,625.0 934,625.3 935,625.6 936,625.9 937,626.2 938,626.5 939,626.7 940,627.0 941,627.2 942,627.5 943,627.7 944,627.9 945,628.1 946,628.3 947,628.4 948,628.6 949,628.7 950,628.9 951,629.0 952,629.1 953,629.2 954,629.3 955,629.3 956,629.4 957,629.4 958,629.5 959,629.5 960,629.5 961,629.5 962,629.5 963,629.4 964,629.4 965,629.3 966,629.2 967,629.2 968,629.1 969,628.9 970,628.8 971,628.7 972,628.5 973,628.4 974,628.2 975,628.0 976,627.8 977,627.6 978,627.4 979,627.1 980,626.9 981,626.6 982,626.4 983,626.1 984,625.8 985,625.5 986,625.2 987,624.9 988,624.6 989,624.3 990,624.0 991,623.6 992,623.3 993,622.9 994,622.6 995,622.2 996,621.9 997,621.5 998,621.1 999,620.7 1000,620.4 1001,620.0 1002,619.6 1003,619.2 1004,618.8 1005,618.5 1006,618.1 1007,617.7 1008,617.3 1009,616.9 1010,616.6 1011,616.2 1012,615.8 1013,615.4 1014,615.1 1015,614.7 1016,614.4 1017,614.0 1018,613.7 1019,613.3 1020,613.0 1021,612.6 1022,612.3 1023,612.0 1024,611.7 1025,611.4 1026,611.1 1027,610.8 1028,610.6 1029,610.3 1030,610.1 1031,609.8 1032,609.6 1033,609.4 1034,609.2 1035,609.0 1036,608.8 1037,608.6 1038,608.4 1039,608.3 1040,608.2 1041,608.0 1042,607.9 1043,607.8 1044,607.7 1045,607.7 1046,607.6 1047,607.6 1048,607.5 1049,607.5 1050,607.5 1051,607.5 1052,607.5 1053,607.6 1054,607.6 1055,607.7 1056,607.7 1057,607.8 1058,607.9 1059,608.0 1060,608.2 1061,608.3 1062,608.4 1063,608.6 1064,608.8 1065,609.0 1066,609.2 1067,609.4 1068,609.6 1069,609.8 1070,610.1 1071,610.3 1072,610.6 1073,610.8 1074,611.1 1075,611.4 1076,611.7 1077,612.0 1078,612.3 1079,612.6 1080,613.0 1081,613.3 1082,613.7 1083,614.0 1084,614.4 1085,614.7 1086,615.1 1087,615.4 1088,615.8 1089,616.2 1090,616.6 1091,616.9 1092,617.3 1093,617.7 1094,618.1 1095,618.5 1096,618.8 1097,619.2 1098,619.6 1099,620.0 1100,620.4 1101,620.7 1102,621.1 1103,621.5 1104,621.9 1105,622.2 1106,622.6 1107,622.9 1108,623.3 1109,623.6 1110,624.0 1111,624.3 1112,624.6 1113,624.9 1114,625.2 1115,625.5 1116,625.8 1117,626.1 1118,626.4 1119,626.6 1120,626.9 1121,627.1 1122,627.4 1123,627.6 1124,627.8 1125,628.0 1126,628.2 1127,628.4 1128,628.5 1129,628.7 1130,628.8 1131,628.9 1132,629.1 1133,629.2 1134,629.2 1135,629.3 1136,629.4 1137,629.4 1138,629.5 1139,629.5 1140,629.5 1141,629.5 1142,629.5 1143,629.4 1144,629.4 1145,629.3 1146,629.3 1147,629.2 1148,629.1 1149,629.0 1150,628.9 1151,628.7 1152,628.6 1153,628.4 1154,628.3 1155,628.1 1156,627.9 1157,627.7 1158,627.5 1159,627.2 1160,627.0 1161,626.7 1162,626.5 1163,626.2 1164,625.9 1165,625.6 1166,625.3 1167,625.0 1168,624.7 1169,624.4 1170,624.1 1171,623.8 1172,623.4 1173,623.1 1174,622.7 1175,622.4 1176,622.0 1177,621.6 1178,621.3 1179,620.9 1180,620.5 1181,620.1 1182,619.8 1183,619.4 1184,619.0 1185,618.6 1186,618.2 1187,617.8 1188,617.5 1189,617.1 1190,616.7 1191,616.3 1192,616.0 1193,615.6 1194,615.2 1195,614.9 1196,614.5 1197,614.1 1198,613.8 1199,613.4 1200,613.1 1201,612.8 1202,612.5 1203,612.1 1204,611.8 1205,611.5 1206,611.2 1207,611.0 1208,610.7 1209,610.4 1210,610.2 1211,609.9 1212,609.7 1213,609.5 1214,609.2 1215,609.0 1216,608.9 1217,608.7 1218,608.5 1219,608.4 1220,608.2 1221,608.1 1222,608.0 1223,607.9 1224,607.8 1225,607.7 1226,607.6 1227,607.6 1228,607.5 1229,607.5 1230,607.5 1231,607.5 1232,607.5 1233,607.5 1234,607.6 1235,607.6 1236,607.7 1237,607.8 1238,607.9 1239,608.0 1240,608.1 1241,608.2 1242,608.4 1243,608.5 1244,608.7 1245,608.9 1246,609.1 1247,609.3 1248,609.5 1249,609.7 1250,610.0 1251,610.2 1252,610.5 1253,610.7 1254,611.0 1255,611.3 1256,611.6 1257,611.9 1258,612.2 1259,612.5 1260,612.8 1261,613.2 1262,613.5 1263,613.9 1264,614.2 1265,614.6 1266,614.9 1267,615.3 1268,615.7 1269,616.0 1270,616.4 1271,616.8 1272,617.2 1273,617.5 1274,617.9 1275,618.3 1276,618.7 1277,619.1 1278,619.5 1279,619.8 1280,620.2 1281,620.6 1282,621.0 1283,621.3 1284,621.7 1285,622.1 1286,622.4 1287,622.8 1288,623.1 1289,623.5 1290,623.8 1291,624.2 1292,624.5 1293,624.8 1294,625.1 1295,625.4 1296,625.7 1297,626.0 1298,626.3 1299,626.5 1300,626.8 1301,627.0 1302,627.3 1303,627.5 1304,627.7 1305,627.9 1306,628.1 1307,628.3 1308,628.5 1309,628.6 1310,628.8 1311,628.9 1312,629.0 1313,629.1 1314,629.2 1315,629.3 1316,629.4 1317,629.4" fill="none" stroke="#e8e850" stroke-width="1.2"/><polyline points="870,602.6 871,602.6 872,602.7 873,602.8 874,602.9 875,603.0 876,603.2 877,603.3 878,603.5 879,603.7 880,604.0 881,604.2 882,604.5 883,604.7 884,605.0 885,605.3 886,605.7 887,606.0 888,606.4 889,606.7 890,607.1 891,607.5 892,607.9 893,608.4 894,608.8 895,609.2 896,609.7 897,610.2 898,610.7 899,611.2 900,611.7 901,612.2 902,612.7 903,613.2 904,613.7 905,614.3 906,614.8 907,615.3 908,615.9 909,616.4 910,617.0 911,617.6 912,618.1 913,618.7 914,619.2 915,619.8 916,620.3 917,620.9 918,621.4 919,622.0 920,622.5 921,623.1 922,623.6 923,624.1 924,624.6 925,625.1 926,625.6 927,626.1 928,626.6 929,627.1 930,627.6 931,628.0 932,628.5 933,628.9 934,629.3 935,629.7 936,630.1 937,630.5 938,630.8 939,631.2 940,631.5 941,631.8 942,632.1 943,632.4 944,632.7 945,632.9 946,633.2 947,633.4 948,633.6 949,633.8 950,633.9 951,634.1 952,634.2 953,634.3 954,634.4 955,634.4 956,634.5 957,634.5 958,634.5 959,634.5 960,634.5 961,634.4 962,634.3 963,634.2 964,634.1 965,634.0 966,633.9 967,633.7 968,633.5 969,633.3 970,633.1 971,632.8 972,632.6 973,632.3 974,632.0 975,631.7 976,631.4 977,631.1 978,630.7 979,630.3 980,630.0 981,629.6 982,629.1 983,628.7 984,628.3 985,627.8 986,627.4 987,626.9 988,626.4 989,625.9 990,625.4 991,624.9 992,624.4 993,623.9 994,623.4 995,622.8 996,622.3 997,621.8 998,621.2 999,620.7 1000,620.1 1001,619.6 1002,619.0 1003,618.4 1004,617.9 1005,617.3 1006,616.8 1007,616.2 1008,615.7 1009,615.1 1010,614.6 1011,614.0 1012,613.5 1013,613.0 1014,612.5 1015,612.0 1016,611.5 1017,611.0 1018,610.5 1019,610.0 1020,609.5 1021,609.1 1022,608.6 1023,608.2 1024,607.8 1025,607.4 1026,607.0 1027,606.6 1028,606.2 1029,605.9 1030,605.5 1031,605.2 1032,604.9 1033,604.6 1034,604.4 1035,604.1 1036,603.9 1037,603.7 1038,603.5 1039,603.3 1040,603.1 1041,603.0 1042,602.8 1043,602.7 1044,602.7 1045,602.6 1046,602.5 1047,602.5 1048,602.5 1049,602.5 1050,602.5 1051,602.6 1052,602.7 1053,602.7 1054,602.8 1055,603.0 1056,603.1 1057,603.3 1058,603.5 1059,603.7 1060,603.9 1061,604.1 1062,604.4 1063,604.6 1064,604.9 1065,605.2 1066,605.5 1067,605.9 1068,606.2 1069,606.6 1070,607.0 1071,607.4 1072,607.8 1073,608.2 1074,608.6 1075,609.1 1076,609.5 1077,610.0 1078,610.5 1079,611.0 1080,611.5 1081,612.0 1082,612.5 1083,613.0 1084,613.5 1085,614.0 1086,614.6 1087,615.1 1088,615.7 1089,616.2 1090,616.8 1091,617.3 1092,617.9 1093,618.4 1094,619.0 1095,619.6 1096,620.1 1097,620.7 1098,621.2 1099,621.8 1100,622.3 1101,622.8 1102,623.4 1103,623.9 1104,624.4 1105,624.9 1106,625.4 1107,625.9 1108,626.4 1109,626.9 1110,627.4 1111,627.8 1112,628.3 1113,628.7 1114,629.1 1115,629.6 1116,630.0 1117,630.3 1118,630.7 1119,631.1 1120,631.4 1121,631.7 1122,632.0 1123,632.3 1124,632.6 1125,632.8 1126,633.1 1127,633.3 1128,633.5 1129,633.7 1130,633.9 1131,634.0 1132,634.1 1133,634.2 1134,634.3 1135,634.4 1136,634.5 1137,634.5 1138,634.5 1139,634.5 1140,634.5 1141,634.4 1142,634.4 1143,634.3 1144,634.2 1145,634.1 1146,633.9 1147,633.8 1148,633.6 1149,633.4 1150,633.2 1151,632.9 1152,632.7 1153,632.4 1154,632.1 1155,631.8 1156,631.5 1157,631.2 1158,630.8 1159,630.5 1160,630.1 1161,629.7 1162,629.3 1163,628.9 1164,628.5 1165,628.0 1166,627.6 1167,627.1 1168,626.6 1169,626.1 1170,625.6 1171,625.1 1172,624.6 1173,624.1 1174,623.6 1175,623.1 1176,622.5 1177,622.0 1178,621.4 1179,620.9 1180,620.3 1181,619.8 1182,619.2 1183,618.7 1184,618.1 1185,617.6 1186,617.0 1187,616.4 1188,615.9 1189,615.3 1190,614.8 1191,614.3 1192,613.7 1193,613.2 1194,612.7 1195,612.2 1196,611.7 1197,611.2 1198,610.7 1199,610.2 1200,609.7 1201,609.2 1202,608.8 1203,608.4 1204,607.9 1205,607.5 1206,607.1 1207,606.7 1208,606.4 1209,606.0 1210,605.7 1211,605.3 1212,605.0 1213,604.7 1214,604.5 1215,604.2 1216,604.0 1217,603.7 1218,603.5 1219,603.3 1220,603.2 1221,603.0 1222,602.9 1223,602.8 1224,602.7 1225,602.6 1226,602.6 1227,602.5 1228,602.5 1229,602.5 1230,602.5 1231,602.6 1232,602.6 1233,602.7 1234,602.8 1235,602.9 1236,603.1 1237,603.2 1238,603.4 1239,603.6 1240,603.8 1241,604.0 1242,604.3 1243,604.5 1244,604.8 1245,605.1 1246,605.4 1247,605.7 1248,606.1 1249,606.4 1250,606.8 1251,607.2 1252,607.6 1253,608.0 1254,608.4 1255,608.9 1256,609.3 1257,609.8 1258,610.3 1259,610.8 1260,611.3 1261,611.8 1262,612.3 1263,612.8 1264,613.3 1265,613.8 1266,614.4 1267,614.9 1268,615.5 1269,616.0 1270,616.6 1271,617.1 1272,617.7 1273,618.2 1274,618.8 1275,619.3 1276,619.9 1277,620.4 1278,621.0 1279,621.5 1280,622.1 1281,622.6 1282,623.2 1283,623.7 1284,624.2 1285,624.7 1286,625.2 1287,625.7 1288,626.2 1289,626.7 1290,627.2 1291,627.7 1292,628.1 1293,628.6 1294,629.0 1295,629.4 1296,629.8 1297,630.2 1298,630.6 1299,630.9 1300,631.3 1301,631.6 1302,631.9 1303,632.2 1304,632.5 1305,632.7 1306,633.0 1307,633.2 1308,633.4 1309,633.6 1310,633.8 1311,633.9 1312,634.1 1313,634.2 1314,634.3 1315,634.4 1316,634.4 1317,634.5" fill="none" stroke="#20b040" stroke-width="2"/><text x="870" y="556.4" font-family="Liberation Sans" font-size="9" fill="#e8e850" stroke="#e8e850" stroke-width="0.3" textLength="8" lengthAdjust="spacingAndGlyphs">U1</text><text x="884" y="556.4" font-family="Liberation Sans" font-size="9" fill="#e8e850" stroke="#e8e850" stroke-width="0.3" textLength="21.2" lengthAdjust="spacingAndGlyphs">45.00</text><text x="924" y="556.4" font-family="Liberation Sans" font-size="9" fill="#e8e850" stroke="#e8e850" stroke-width="0.3" textLength="7" lengthAdjust="spacingAndGlyphs">V</text><text x="870" y="566.7" font-family="Liberation Sans" font-size="9" fill="#20c040" stroke="#20c040" stroke-width="0.3" textLength="4.5" lengthAdjust="spacingAndGlyphs">I1</text><text x="884" y="566.7" font-family="Liberation Sans" font-size="9" fill="#20c040" stroke="#20c040" stroke-width="0.3" textLength="21.2" lengthAdjust="spacingAndGlyphs">600.0</text><text x="924" y="566.7" font-family="Liberation Sans" font-size="9" fill="#20c040" stroke="#20c040" stroke-width="0.3" textLength="7" lengthAdjust="spacingAndGlyphs">A</text><text x="870" y="675.8" font-family="Liberation Sans" font-size="9" fill="#20c040" stroke="#20c040" stroke-width="0.3" textLength="4.5" lengthAdjust="spacingAndGlyphs">I1</text><text x="883.8" y="675.8" font-family="Liberation Sans" font-size="9" fill="#20c040" stroke="#20c040" stroke-width="0.3" textLength="26.5" lengthAdjust="spacingAndGlyphs">-600.0</text><text x="924" y="675.8" font-family="Liberation Sans" font-size="9" fill="#20c040" stroke="#20c040" stroke-width="0.3" textLength="7" lengthAdjust="spacingAndGlyphs">A</text><text x="1069.6" y="685.6" font-family="Liberation Sans" font-size="9" fill="#f0f0f0" stroke="#f0f0f0" stroke-width="0.3" textLength="46.4" lengthAdjust="spacingAndGlyphs">5 msec/div</text><text x="870" y="685.5" font-family="Liberation Sans" font-size="9" fill="#e8e850" stroke="#e8e850" stroke-width="0.3" textLength="8" lengthAdjust="spacingAndGlyphs">U1</text><text x="883.8" y="685.5" font-family="Liberation Sans" font-size="9" fill="#e8e850" stroke="#e8e850" stroke-width="0.3" textLength="26.2" lengthAdjust="spacingAndGlyphs">-45.00</text><text x="924" y="685.5" font-family="Liberation Sans" font-size="9" fill="#e8e850" stroke="#e8e850" stroke-width="0.3" textLength="7" lengthAdjust="spacingAndGlyphs">V</text></svg>
<svg style="position:absolute;left:0;top:0" width="1329" height="698"><text x="0" y="0" transform="translate(1077,666) rotate(-29)" font-family="Liberation Sans" font-weight="bold" font-size="56" fill="rgb(190,190,190)" fill-opacity="0.36" textLength="275" lengthAdjust="spacingAndGlyphs">ybzhan.cn</text><text x="0" y="0" transform="translate(25,173) rotate(-29.5)" font-family="Liberation Sans" font-weight="bold" font-size="58" fill="rgb(190,190,190)" fill-opacity="0.2" textLength="290" lengthAdjust="spacingAndGlyphs">ybzhan.cn</text></svg>
<div style="position:absolute;left:82px;top:696px;width:1247px;height:2px;background:#e4eef4;"></div>
<div style="position:absolute;left:870px;top:119px;width:449px;height:1.6px;background:#585e64;"></div>
<div style="position:absolute;left:870px;top:385px;width:448px;height:1.6px;background:#585e64;"></div>
<div style="position:absolute;left:404px;top:536px;width:447px;height:1.6px;background:#585e64;"></div>
<div style="position:absolute;left:869px;top:536px;width:449px;height:1.6px;background:#585e64;"></div>
<div style="position:absolute;left:395px;top:355px;width:934px;height:1px;background:#a4acb0;"></div>
<div style="position:absolute;left:395px;top:356px;width:934px;height:1px;background:#565c62;"></div>
<div style="position:absolute;left:395px;top:357px;width:934px;height:1px;background:#eef4f8;"></div>
<div style="position:absolute;left:395px;top:509px;width:934px;height:1px;background:#9aa4aa;"></div>
<div style="position:absolute;left:395px;top:510px;width:934px;height:1px;background:#e8f0f4;"></div>
<div style="position:absolute;left:393px;top:89px;width:2px;height:607px;background:#202428;"></div>
<div style="position:absolute;left:860px;top:89px;width:2px;height:607px;background:#202428;"></div>
<div style="position:absolute;left:1326px;top:89px;width:1.5px;height:607px;background:#3a4046;"></div>
<div style="position:absolute;left:1327.5px;top:89px;width:1.5px;height:607px;background:#dce8f0;"></div>
</body></html>
